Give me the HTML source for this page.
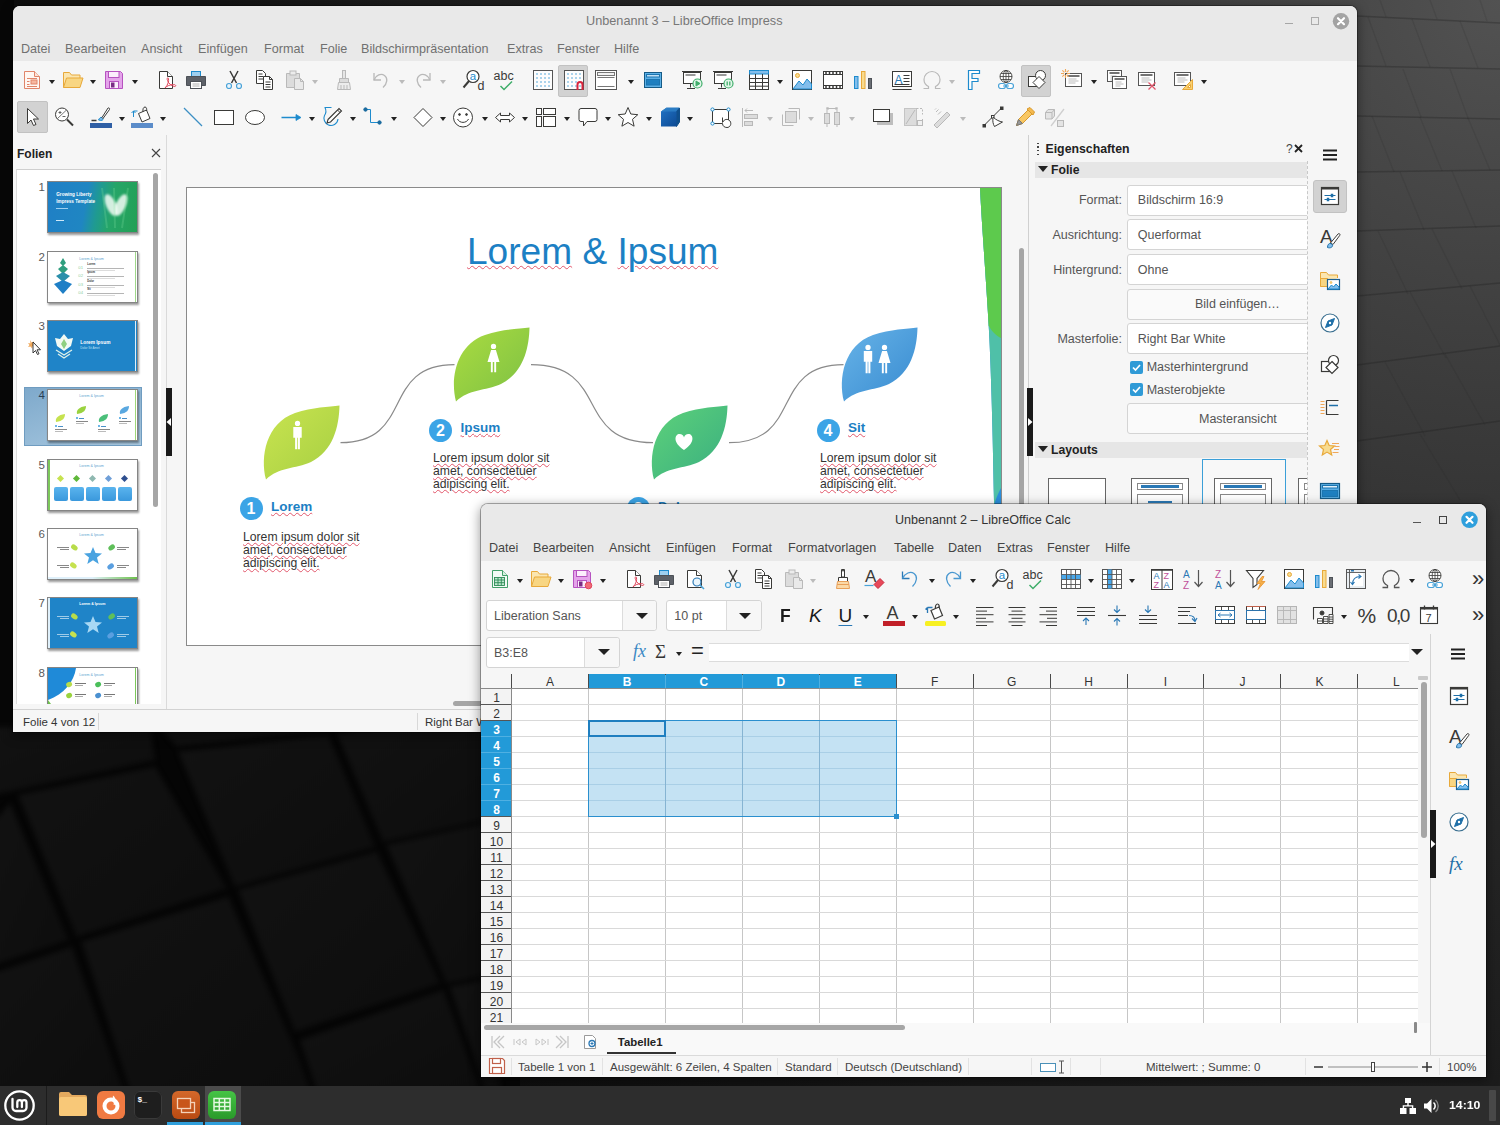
<!DOCTYPE html>
<html lang="de"><head><meta charset="utf-8"><title>Desktop</title>
<style>
*{box-sizing:border-box;margin:0;padding:0}
html,body{width:1500px;height:1125px;overflow:hidden}
body{position:relative;font-family:"Liberation Sans",sans-serif;font-size:12.5px;color:#5c5c5c;
background:radial-gradient(circle at 100% 0,#525252 0,#494949 150px,#3f3f3f 330px,#353535 515px,#262626 800px,#1c1c1c 1080px,#111 1350px,#0c0c0c 1550px,#080808 1900px)}
.abs{position:absolute}
.win{position:absolute;background:#f6f6f6;border-radius:7px 7px 0 0;box-shadow:0 0 0 1px rgba(0,0,0,.3),0 3px 12px 1px rgba(0,0,0,.4);overflow:hidden}
.tbar{position:absolute;left:0;right:0;top:0;background:#e9e9e9}
.t{position:absolute;white-space:nowrap;line-height:1}
.b{font-weight:bold}
svg{position:absolute;overflow:visible}
.ic{position:absolute;width:24px;height:24px}
.dd{position:absolute;width:0;height:0;border-left:3.5px solid transparent;border-right:3.5px solid transparent;border-top:4px solid #222}
.dd.g{border-top-color:#bbb}
.sel{position:absolute;background:#d2d2d2;border:1px solid #c2c2c2;border-radius:2px}
.inp{position:absolute;background:#fff;border:1px solid #d4d4d4;border-radius:3px}
.btn{position:absolute;background:#fafafa;border:1px solid #d4d4d4;border-radius:3px}
</style></head>
<body>
<svg class="abs" style="left:0;top:0" width="1500" height="1125" viewBox="0 0 1500 1125">
<defs><filter id="bl" x="-5%" y="-5%" width="110%" height="110%" color-interpolation-filters="sRGB"><feGaussianBlur stdDeviation="2.500"/></filter><linearGradient id="tg" x1="0" y1="0" x2="1" y2="1"><stop offset="0" stop-color="#121212"/><stop offset="1" stop-color="#0d0d0d"/></linearGradient></defs>
<rect x="0" y="700" width="520" height="400" fill="#050505"/>
<rect x="0" y="0" width="14" height="740" fill="#070707"/>
<g filter="url(#bl)">
<polygon points="18.3,795.0 155.0,766.7 226.7,888.3 76.7,936.7" fill="url(#tg)"/>
<polygon points="178.3,751.7 328.3,735.0 375.0,846.7 235.0,886.7" fill="url(#tg)"/>
<polygon points="336.7,733.3 500.0,713.3 500.0,816.7 383.3,841.7" fill="url(#tg)"/>
<polygon points="-6.7,823.3 10.0,803.3 68.3,940.0 -6.7,965.0" fill="url(#tg)"/>
<polygon points="81.7,941.7 228.3,896.7 296.7,1053.3 310.0,1090.0 130.0,1090.0" fill="url(#tg)"/>
<polygon points="238.3,890.0 376.7,851.7 440.0,983.3 295.0,1031.7" fill="url(#tg)"/>
<polygon points="386.7,845.0 500.0,820.0 500.0,973.3 446.7,983.3" fill="url(#tg)"/>
<polygon points="-6.7,973.3 71.7,946.7 123.3,1090.0 -6.7,1090.0" fill="url(#tg)"/>
<polygon points="300.0,1040.0 443.3,990.0 480.0,1090.0 316.7,1090.0" fill="url(#tg)"/>
<polygon points="450.0,986.7 500.0,976.7 500.0,1090.0 485.0,1090.0" fill="url(#tg)"/>
<polygon points="-6.7,726.7 150.0,726.7 155.0,760.0 16.7,790.0 -6.7,795.0" fill="url(#tg)"/>
<polygon points="160.0,726.7 326.7,726.7 328.3,730.0 176.7,746.7" fill="url(#tg)"/>
</g>
<line x1="1357" y1="16" x2="1500" y2="23" stroke="#1e1e1e" stroke-width="1.400" stroke-opacity=".32"/>
<line x1="1357" y1="66" x2="1500" y2="69" stroke="#1e1e1e" stroke-width="1.400" stroke-opacity=".32"/>
<line x1="1357" y1="116" x2="1500" y2="119" stroke="#1e1e1e" stroke-width="1.400" stroke-opacity=".32"/>
<line x1="1357" y1="172" x2="1500" y2="170" stroke="#1e1e1e" stroke-width="1.400" stroke-opacity=".32"/>
<line x1="1357" y1="231" x2="1500" y2="226" stroke="#1e1e1e" stroke-width="1.400" stroke-opacity=".32"/>
<line x1="1357" y1="296" x2="1500" y2="283" stroke="#1e1e1e" stroke-width="1.400" stroke-opacity=".32"/>
<line x1="1357" y1="365" x2="1500" y2="346" stroke="#1e1e1e" stroke-width="1.400" stroke-opacity=".32"/>
<line x1="1357" y1="441" x2="1500" y2="421" stroke="#1e1e1e" stroke-width="1.400" stroke-opacity=".32"/>
<line x1="1380" y1="0" x2="1386" y2="17" stroke="#1e1e1e" stroke-width="1.300" stroke-opacity=".13"/>
<line x1="1430" y1="0" x2="1437" y2="19" stroke="#1e1e1e" stroke-width="1.300" stroke-opacity=".13"/>
<line x1="1480" y1="0" x2="1487" y2="21" stroke="#1e1e1e" stroke-width="1.300" stroke-opacity=".13"/>
<line x1="1368" y1="17" x2="1386" y2="66" stroke="#1e1e1e" stroke-width="1.300" stroke-opacity=".13"/>
<line x1="1412" y1="19" x2="1430" y2="67" stroke="#1e1e1e" stroke-width="1.300" stroke-opacity=".13"/>
<line x1="1460" y1="21" x2="1478" y2="68" stroke="#1e1e1e" stroke-width="1.300" stroke-opacity=".13"/>
<line x1="1403" y1="69" x2="1421" y2="117" stroke="#1e1e1e" stroke-width="1.300" stroke-opacity=".13"/>
<line x1="1450" y1="69" x2="1468" y2="118" stroke="#1e1e1e" stroke-width="1.300" stroke-opacity=".13"/>
<line x1="1372" y1="116" x2="1394" y2="172" stroke="#1e1e1e" stroke-width="1.300" stroke-opacity=".13"/>
<line x1="1420" y1="117" x2="1442" y2="171" stroke="#1e1e1e" stroke-width="1.300" stroke-opacity=".13"/>
<line x1="1468" y1="118" x2="1490" y2="170" stroke="#1e1e1e" stroke-width="1.300" stroke-opacity=".13"/>
<line x1="1400" y1="172" x2="1424" y2="230" stroke="#1e1e1e" stroke-width="1.300" stroke-opacity=".13"/>
<line x1="1452" y1="171" x2="1476" y2="228" stroke="#1e1e1e" stroke-width="1.300" stroke-opacity=".13"/>
<line x1="1378" y1="231" x2="1408" y2="294" stroke="#1e1e1e" stroke-width="1.300" stroke-opacity=".13"/>
<line x1="1432" y1="229" x2="1462" y2="289" stroke="#1e1e1e" stroke-width="1.300" stroke-opacity=".13"/>
<line x1="1410" y1="292" x2="1446" y2="358" stroke="#1e1e1e" stroke-width="1.300" stroke-opacity=".13"/>
<line x1="1470" y1="286" x2="1500" y2="345" stroke="#1e1e1e" stroke-width="1.300" stroke-opacity=".13"/>
<line x1="1385" y1="362" x2="1425" y2="436" stroke="#1e1e1e" stroke-width="1.300" stroke-opacity=".13"/>
<line x1="1445" y1="354" x2="1485" y2="425" stroke="#1e1e1e" stroke-width="1.300" stroke-opacity=".13"/>
<line x1="1420" y1="434" x2="1460" y2="500" stroke="#1e1e1e" stroke-width="1.300" stroke-opacity=".13"/>
</svg>
<div class="win" id="impress" style="left:13px;top:6px;width:1344px;height:726px">
<svg width="0" height="0"><defs><linearGradient id="cg" x1="0" y1="0" x2="1" y2="1"><stop offset="0" stop-color="#1f6fc0"/><stop offset="1" stop-color="#0d4a94"/></linearGradient></defs></svg>
<div class="tbar" style="height:55px"></div>
<div class="t " style="left:573.0px;top:8.5px;font-size:12.7px;color:#777;">Unbenannt 3 – LibreOffice Impress</div>
<div class="abs" style="left:1272.0px;top:16.7px;width:8.0px;height:1.3px;background:#a6a6a6"></div>
<div class="abs" style="left:1298.0px;top:11.0px;width:8.0px;height:8.0px;border:1px solid #ababab"></div>
<svg style="left:1318px;top:5px" width="20" height="20" viewBox="0 0 20 20"><circle cx="10" cy="10.200" r="8.200" fill="#a3a3a3"/><path d="M7 7.200l6 6M13 7.200l-6 6" stroke="#fff" stroke-width="2.200" stroke-linecap="round"/></svg>
<div class="t " style="left:8.0px;top:37.3px;font-size:12.6px;color:#707070;">Datei</div>
<div class="t " style="left:52.0px;top:37.3px;font-size:12.6px;color:#707070;">Bearbeiten</div>
<div class="t " style="left:128.0px;top:37.3px;font-size:12.6px;color:#707070;">Ansicht</div>
<div class="t " style="left:185.0px;top:37.3px;font-size:12.6px;color:#707070;">Einfügen</div>
<div class="t " style="left:251.0px;top:37.3px;font-size:12.6px;color:#707070;">Format</div>
<div class="t " style="left:307.0px;top:37.3px;font-size:12.6px;color:#707070;">Folie</div>
<div class="t " style="left:348.0px;top:37.3px;font-size:12.6px;color:#707070;">Bildschirmpräsentation</div>
<div class="t " style="left:494.0px;top:37.3px;font-size:12.6px;color:#707070;">Extras</div>
<div class="t " style="left:544.0px;top:37.3px;font-size:12.6px;color:#707070;">Fenster</div>
<div class="t " style="left:601.0px;top:37.3px;font-size:12.6px;color:#707070;">Hilfe</div>
<div class="sel" style="left:544.5px;top:58.5px;width:30.5px;height:32.0px;"></div>
<div class="sel" style="left:1007.8px;top:58.5px;width:30.0px;height:32.0px;"></div>
<svg class="ic" style="left:6.5px;top:62.0px" viewBox="0 0 24 24" ><path d="M4.5 3.5h10l5 5v12h-15z" stroke="#e0856a" fill="#fff7f2" stroke-width="1" /><path d="M14.5 3.5v5h5" stroke="#e0856a" fill="#fbe3d8" stroke-width="1" /><rect x="11" y="12" width="6" height="4" stroke="#e0856a" fill="#f6b79f" stroke-width="1" /><path d="M7 10.5h10M7 13.5h2.5M7 16.5h2.5M7 18.5h10" stroke="#e0856a" fill="none" stroke-width="1" /></svg>
<svg class="ic" style="left:47.8px;top:62.0px" viewBox="0 0 24 24" ><path d="M2.5 19.5v-15h6l2 2.5h8.5v3" stroke="#e8a93a" fill="#fbe6b0" stroke-width="1" /><path d="M2.5 19.5l3-9.5h16.5l-3 9.5z" stroke="#e8a93a" fill="#f8d683" stroke-width="1" /></svg>
<svg class="ic" style="left:88.8px;top:62.0px" viewBox="0 0 24 24" ><path d="M3.5 3.5h15l2 2v15h-17z" stroke="#b653c0" fill="#e4a3ea" stroke-width="1" /><rect x="6.5" y="3.5" width="10.5" height="6" stroke="#b653c0" fill="#fbeefc" stroke-width="1" /><rect x="7.5" y="13.5" width="9" height="7" stroke="#b653c0" fill="#fbeefc" stroke-width="1" /><rect x="9.5" y="15" width="2.5" height="4" stroke="#7b2d86" fill="#7b2d86" stroke-width="1" /></svg>
<svg class="ic" style="left:140.8px;top:62.0px" viewBox="0 0 24 24" ><path d="M5.5 3.5h8l5 5v12h-13z" stroke="#3a3a38" fill="#fff" stroke-width="1" /><path d="M13.5 3.5v5h5" stroke="#3a3a38" fill="#fff" stroke-width="1" /><path d="M11 20c3-3 4-7 3.5-9.5c-.5-1.5-2-.5-1 2c1 3 4 5.5 7 6c2 0 1.5-2-1-2c-3 0-7 1.5-8.500 3.5z" stroke="#e0455a" fill="none" stroke-width="1" /></svg>
<svg class="ic" style="left:170.5px;top:62.0px" viewBox="0 0 24 24" ><rect x="7.5" y="3.5" width="9" height="5" stroke="#1e8bcd" fill="#9fd0f0" stroke-width="1" /><path d="M2.5 8.5h19v9h-19z" stroke="#4d5157" fill="#5d6168" stroke-width="1" /><rect x="6.5" y="13.5" width="11" height="7" stroke="#4d5157" fill="#fff" stroke-width="1" /><path d="M8.5 16h7M8.5 18h7" stroke="#b0b0b0" fill="none" stroke-width="1" /></svg>
<svg class="ic" style="left:208.8px;top:62.0px" viewBox="0 0 24 24" ><path d="M8 3l6.5 12M16 3L9.500 15" stroke="#3a3a38" fill="none" stroke-width="1.5" /><circle cx="7" cy="18" r="2.5" stroke="#4aa3d8" fill="#eaf5fc" stroke-width="1.2"/><circle cx="17" cy="18" r="2.5" stroke="#4aa3d8" fill="#eaf5fc" stroke-width="1.2"/></svg>
<svg class="ic" style="left:239.8px;top:62.0px" viewBox="0 0 24 24" ><path d="M3.500 2.500h6l3 3v10h-9z" stroke="#3a3a38" fill="#fff" stroke-width="1" /><path d="M5.5 6h4M5.500 8.500h5M5.500 11h5" stroke="#3a3a38" fill="none" stroke-width="1" /><path d="M10.5 8.500h6l3 3v10h-9z" stroke="#3a3a38" fill="#fff" stroke-width="1" /><path d="M16.5 8.500v3h3" stroke="#3a3a38" fill="none" stroke-width="1" /><path d="M12.500 14h5M12.500 16.500h5M12.500 19h5" stroke="#3a3a38" fill="none" stroke-width="1" /></svg>
<svg class="ic" style="left:270.3px;top:62.0px" viewBox="0 0 24 24" ><path d="M3.500 5.500h13v14h-13z" stroke="#b9b9b9" fill="#dcdcdc" stroke-width="1" /><rect x="7" y="3" width="6" height="4" stroke="#b9b9b9" fill="#ececec" stroke-width="1" /><path d="M11.500 10.500h6l3 3v8h-9z" stroke="#b9b9b9" fill="#e9e9e9" stroke-width="1" /><path d="M17.5 10.500v3h3" stroke="#b9b9b9" fill="none" stroke-width="1" /></svg>
<svg class="ic" style="left:319.2px;top:62.0px" viewBox="0 0 24 24" ><rect x="10.5" y="2.5" width="3" height="8" stroke="#b9b9b9" fill="#e6e6e6" stroke-width="1" /><path d="M7.500 10.500h9v4h-9z" stroke="#b9b9b9" fill="#dcdcdc" stroke-width="1" /><path d="M6.500 14.500h11l1 7h-13z" stroke="#b9b9b9" fill="#ececec" stroke-width="1" /><path d="M9 17v4M12 17v4M15 17v4" stroke="#b9b9b9" fill="none" stroke-width="1" /></svg>
<svg class="ic" style="left:355.8px;top:62.0px" viewBox="0 0 24 24" ><path d="M5 5v7h7" stroke="#b9b9b9" fill="none" stroke-width="1.3" /><path d="M5 12c2-5 7-7 10.500-4.500c3.500 2.500 3 8-1.500 12" stroke="#b9b9b9" fill="none" stroke-width="1.3" /></svg>
<svg class="ic" style="left:397.5px;top:62.0px" viewBox="0 0 24 24" ><path d="M19 5v7h-7" stroke="#b9b9b9" fill="none" stroke-width="1.3" /><path d="M19 12c-2-5-7-7-10.500-4.500c-3.500 2.500-3 8 1.500 12" stroke="#b9b9b9" fill="none" stroke-width="1.3" /></svg>
<svg class="ic" style="left:448.8px;top:62.0px" viewBox="0 0 24 24" ><circle cx="11" cy="8.5" r="6" stroke="#3a3a38" fill="#fff" stroke-width="1.2"/><path d="M7 13l-5.500 6.500" stroke="#3a3a38" fill="none" stroke-width="2" /><text x="7.800" y="12.300" font-size="11.500" fill="#1e8bcd" font-family="Liberation Sans,sans-serif">a</text><text x="15.500" y="22" font-size="12.500" fill="#3a3a38" font-family="Liberation Sans,sans-serif">d</text></svg>
<svg class="ic" style="left:478.6px;top:62.0px" viewBox="0 0 24 24" ><text x="1.500" y="11.500" font-size="12.500" fill="#3a3a38" font-family="Liberation Sans,sans-serif">abc</text><path d="M8.500 18l3.500 3.500l8-8" stroke="#3fae6a" fill="none" stroke-width="1.5" /></svg>
<svg class="ic" style="left:517.9px;top:62.0px" viewBox="0 0 24 24" ><rect x="2.5" y="2.5" width="19" height="19" stroke="#555" fill="#fdfdfd" stroke-width="1" /><rect x="5.4" y="5.4" width="1.200" height="1.200" fill="#1e8bcd"/><rect x="9.4" y="5.4" width="1.200" height="1.200" fill="#1e8bcd"/><rect x="13.4" y="5.4" width="1.200" height="1.200" fill="#1e8bcd"/><rect x="17.4" y="5.4" width="1.200" height="1.200" fill="#1e8bcd"/><rect x="5.4" y="9.4" width="1.200" height="1.200" fill="#1e8bcd"/><rect x="9.4" y="9.4" width="1.200" height="1.200" fill="#1e8bcd"/><rect x="13.4" y="9.4" width="1.200" height="1.200" fill="#1e8bcd"/><rect x="17.4" y="9.4" width="1.200" height="1.200" fill="#1e8bcd"/><rect x="5.4" y="13.4" width="1.200" height="1.200" fill="#1e8bcd"/><rect x="9.4" y="13.4" width="1.200" height="1.200" fill="#1e8bcd"/><rect x="13.4" y="13.4" width="1.200" height="1.200" fill="#1e8bcd"/><rect x="17.4" y="13.4" width="1.200" height="1.200" fill="#1e8bcd"/><rect x="5.4" y="17.4" width="1.200" height="1.200" fill="#1e8bcd"/><rect x="9.4" y="17.4" width="1.200" height="1.200" fill="#1e8bcd"/><rect x="13.4" y="17.4" width="1.200" height="1.200" fill="#1e8bcd"/><rect x="17.4" y="17.4" width="1.200" height="1.200" fill="#1e8bcd"/></svg>
<svg class="ic" style="left:549.2px;top:62.0px" viewBox="0 0 24 24" ><rect x="2.5" y="2.5" width="19" height="19" stroke="#555" fill="#fdfdfd" stroke-width="1" /><rect x="5.4" y="5.4" width="1.200" height="1.200" fill="#1e8bcd"/><rect x="9.4" y="5.4" width="1.200" height="1.200" fill="#1e8bcd"/><rect x="13.4" y="5.4" width="1.200" height="1.200" fill="#1e8bcd"/><rect x="17.4" y="5.4" width="1.200" height="1.200" fill="#1e8bcd"/><rect x="5.4" y="9.4" width="1.200" height="1.200" fill="#1e8bcd"/><rect x="9.4" y="9.4" width="1.200" height="1.200" fill="#1e8bcd"/><rect x="13.4" y="9.4" width="1.200" height="1.200" fill="#1e8bcd"/><rect x="17.4" y="9.4" width="1.200" height="1.200" fill="#1e8bcd"/><rect x="5.4" y="13.4" width="1.200" height="1.200" fill="#1e8bcd"/><rect x="9.4" y="13.4" width="1.200" height="1.200" fill="#1e8bcd"/><rect x="13.4" y="13.4" width="1.200" height="1.200" fill="#1e8bcd"/><rect x="17.4" y="13.4" width="1.200" height="1.200" fill="#1e8bcd"/><rect x="5.4" y="17.4" width="1.200" height="1.200" fill="#1e8bcd"/><rect x="9.4" y="17.4" width="1.200" height="1.200" fill="#1e8bcd"/><rect x="13.4" y="17.4" width="1.200" height="1.200" fill="#1e8bcd"/><rect x="17.4" y="17.4" width="1.200" height="1.200" fill="#1e8bcd"/><path d="M15.500 22v-5.500a2.500 2.500 0 0 1 5 0v5.500" stroke="#d8263e" fill="none" stroke-width="2" /></svg>
<svg class="ic" style="left:581.0px;top:62.0px" viewBox="0 0 24 24" ><rect x="1.5" y="2.5" width="21" height="19" stroke="#555" fill="#fff" stroke-width="1" /><rect x="3.5" y="4.5" width="17" height="3" stroke="#777" fill="#f0f0f0" stroke-width="1" /><path d="M3.500 9.500h17M3.500 18.500h17" stroke="#777" fill="none" stroke-width="1" /></svg>
<svg class="ic" style="left:628.0px;top:62.0px" viewBox="0 0 24 24" ><rect x="3.5" y="4.5" width="17" height="15" stroke="#155a86" fill="#5cb0e6" stroke-width="1" /><rect x="5.5" y="6.5" width="13" height="2.5" stroke="#1b75b0" fill="#bfe0f6" stroke-width="1" /><rect x="5.5" y="11.5" width="13" height="5.5" stroke="#1b75b0" fill="#1e7fc0" stroke-width="1" /></svg>
<svg class="ic" style="left:666.7px;top:62.0px" viewBox="0 0 24 24" ><path d="M2 3.500h20" stroke="#3a3a38" fill="none" stroke-width="1.2" /><rect x="3.5" y="4.5" width="17" height="11" stroke="#3a3a38" fill="#fff" stroke-width="1" /><path d="M5.500 7h10" stroke="#777" fill="none" stroke-width="1.5" /><path d="M10.500 15.500v4M7 20.500h8" stroke="#3a3a38" fill="none" stroke-width="1" /><circle cx="17.5" cy="15.5" r="4.5" stroke="#3fae6a" fill="#e3f6ea" stroke-width="1.2"/><path d="M16 13l4 2.500l-4 2.500z" stroke="#3fae6a" fill="#3fae6a" stroke-width="1" /></svg>
<svg class="ic" style="left:697.5px;top:62.0px" viewBox="0 0 24 24" ><path d="M2 3.500h20" stroke="#3a3a38" fill="none" stroke-width="1.2" /><rect x="3.5" y="4.5" width="17" height="11" stroke="#3a3a38" fill="#fff" stroke-width="1" /><path d="M5.500 7h10" stroke="#777" fill="none" stroke-width="1.5" /><path d="M10.500 15.500v4M7 20.500h8" stroke="#3a3a38" fill="none" stroke-width="1" /><circle cx="17.5" cy="15.5" r="4.5" stroke="#3fae6a" fill="#e3f6ea" stroke-width="1.2"/><path d="M16.200 13.500v4M18.800 13.500v4" stroke="#3fae6a" fill="none" stroke-width="1.3" /></svg>
<svg class="ic" style="left:733.8px;top:62.0px" viewBox="0 0 24 24" ><rect x="2.5" y="2.5" width="19" height="19" stroke="#3a3a38" fill="#fff" stroke-width="1" /><rect x="2.5" y="2.5" width="19" height="3.5" stroke="#1e8bcd" fill="#83beec" stroke-width="1" /><path d="M2.500 10.500h19M2.500 14.500h19M2.500 18.200h19M8.500 6v15.500M15.500 6v15.500" stroke="#3a3a38" fill="none" stroke-width="1" /></svg>
<svg class="ic" style="left:777.0px;top:62.0px" viewBox="0 0 24 24" ><rect x="2.5" y="2.5" width="19" height="19" stroke="#3a3a38" fill="#fff" stroke-width="1" /><path d="M3 21l6-8l4 4l4-6l4.500 5v5z" stroke="#1e8bcd" fill="#83beec" stroke-width="1" /><circle cx="7.5" cy="7.5" r="2" stroke="#e8a93a" fill="#f8db8f" stroke-width="1"/></svg>
<svg class="ic" style="left:807.8px;top:62.0px" viewBox="0 0 24 24" ><rect x="2.5" y="3.5" width="19" height="17" stroke="#3a3a38" fill="#fff" stroke-width="1" /><path d="M2.500 6.500h19M2.500 17.500h19" stroke="#3a3a38" fill="none" stroke-width="1" /><path d="M5 3.500v3M8.500 3.500v3M12 3.500v3M15.500 3.500v3M19 3.500v3M5 17.500v3M8.500 17.500v3M12 17.500v3M15.500 17.500v3M19 17.500v3" stroke="#3a3a38" fill="none" stroke-width="1.5" /></svg>
<svg class="ic" style="left:838.0px;top:62.0px" viewBox="0 0 24 24" ><rect x="3.5" y="8.5" width="3.5" height="12" stroke="#1e8bcd" fill="#83beec" stroke-width="1" /><rect x="10.5" y="3.5" width="3.5" height="17" stroke="#e8a93a" fill="#f8db8f" stroke-width="1" /><rect x="17.5" y="10.5" width="3" height="10" stroke="#4d5157" fill="#6a6e74" stroke-width="1" /></svg>
<svg class="ic" style="left:877.4px;top:62.0px" viewBox="0 0 24 24" ><rect x="2.5" y="3.5" width="19" height="15" stroke="#3a3a38" fill="#fff" stroke-width="1" /><text x="4.500" y="15.500" font-size="12" fill="#2a78b5" font-family="Liberation Sans,sans-serif">A</text><path d="M13.500 7.500h6M13.500 10.500h6M13.500 13.500h6M4.500 16.500h15M2.500 21.500h19" stroke="#3a3a38" fill="none" stroke-width="1" /></svg>
<svg class="ic" style="left:906.7px;top:62.0px" viewBox="0 0 24 24" ><path d="M3.500 20.500h5v-2c-3-1.500-4.500-4-4.500-7a8 8 0 0 1 16 0c0 3-1.500 5.500-4.500 7v2h5" stroke="#b9b9b9" fill="none" stroke-width="1.2" /></svg>
<svg class="ic" style="left:949.4px;top:62.0px" viewBox="0 0 24 24" ><path d="M6.500 2.500h11v3h-7.500v5h6v3h-6v8h-3.500z" stroke="#1e8bcd" fill="#fff" stroke-width="1.2" /></svg>
<svg class="ic" style="left:981.0px;top:62.0px" viewBox="0 0 24 24" ><circle cx="12" cy="8.5" r="6" stroke="#3a3a38" fill="#fff" stroke-width="0.9"/><ellipse cx="12" cy="8.5" rx="2.8" ry="6" stroke="#3a3a38" fill="none" stroke-width="0.8"/><path d="M6 8.500h12M12 2.500v12M7 5.500h10M7 11.500h10" stroke="#3a3a38" fill="none" stroke-width="0.8" /><rect x="4.5" y="15.5" width="7" height="5" stroke="#4aa3d8" fill="#fff" stroke-width="1.2" rx="2.500"/><rect x="12.5" y="15.5" width="7" height="5" stroke="#4aa3d8" fill="#fff" stroke-width="1.2" rx="2.500"/><line x1="9" y1="18" x2="15" y2="18" stroke="#4aa3d8" stroke-width="1.2" /></svg>
<svg class="ic" style="left:1011.7px;top:62.0px" viewBox="0 0 24 24" ><rect x="3.5" y="8.5" width="9" height="10" stroke="#3a3a38" fill="#fff" stroke-width="1" /><circle cx="15.5" cy="7.5" r="5" stroke="#3a3a38" fill="#fff" stroke-width="1"/><path d="M14 8.500l6 6l-6 6l-6-6z" stroke="#3a3a38" fill="#fff" stroke-width="1" /></svg>
<svg class="ic" style="left:1047.0px;top:62.0px" viewBox="0 0 24 24" ><rect x="5.5" y="5.5" width="16" height="13" stroke="#555" fill="#fff" stroke-width="1" /><path d="M7.5 8.0h12" stroke="#444" fill="none" stroke-width="1.6" /><path d="M8.5 11.0h8M8.5 13.0h10M8.5 15.0h7" stroke="#aaa" fill="none" stroke-width="0.8" /><line x1="7.0" y1="5.5" x2="10.0" y2="5.5" stroke="#f0a85a" stroke-width="1.1" /><line x1="6.6" y1="6.6" x2="8.7" y2="8.7" stroke="#f0a85a" stroke-width="1.1" /><line x1="5.5" y1="7.0" x2="5.5" y2="10.0" stroke="#f0a85a" stroke-width="1.1" /><line x1="4.4" y1="6.6" x2="2.3" y2="8.7" stroke="#f0a85a" stroke-width="1.1" /><line x1="4.0" y1="5.5" x2="1.0" y2="5.5" stroke="#f0a85a" stroke-width="1.1" /><line x1="4.4" y1="4.4" x2="2.3" y2="2.3" stroke="#f0a85a" stroke-width="1.1" /><line x1="5.5" y1="4.0" x2="5.5" y2="1.0" stroke="#f0a85a" stroke-width="1.1" /><line x1="6.6" y1="4.4" x2="8.7" y2="2.3" stroke="#f0a85a" stroke-width="1.1" /></svg>
<svg class="ic" style="left:1091.7px;top:62.0px" viewBox="0 0 24 24" ><rect x="2.5" y="2.5" width="14" height="11" stroke="#555" fill="#fff" stroke-width="1" /><path d="M4.5 5.0h10" stroke="#444" fill="none" stroke-width="1.6" /><path d="M5.5 8.0h6M5.5 10.0h8M5.5 12.0h5" stroke="#aaa" fill="none" stroke-width="0.8" /><rect x="7.5" y="8.5" width="14" height="12" stroke="#555" fill="#fff" stroke-width="1" /><path d="M9.5 11.0h10" stroke="#444" fill="none" stroke-width="1.6" /><path d="M10.5 14.0h6M10.5 16.0h8M10.5 18.0h5" stroke="#aaa" fill="none" stroke-width="0.8" /></svg>
<svg class="ic" style="left:1122.7px;top:62.0px" viewBox="0 0 24 24" ><rect x="2.5" y="4.5" width="16" height="13" stroke="#555" fill="#fff" stroke-width="1" /><path d="M4.5 7.0h12" stroke="#444" fill="none" stroke-width="1.6" /><path d="M5.5 10.0h8M5.5 12.0h10M5.5 14.0h7" stroke="#aaa" fill="none" stroke-width="0.8" /><path d="M12.500 14.500l7 7M19.500 14.500l-7 7" stroke="#e0556a" fill="none" stroke-width="1.3" /></svg>
<svg class="ic" style="left:1159.0px;top:62.0px" viewBox="0 0 24 24" ><rect x="2.5" y="4.5" width="16" height="13" stroke="#555" fill="#fff" stroke-width="1" /><path d="M4.5 7.0h12" stroke="#444" fill="none" stroke-width="1.6" /><path d="M5.5 10.0h8M5.5 12.0h10M5.5 14.0h7" stroke="#aaa" fill="none" stroke-width="0.8" /><path d="M20.500 11.500v10h-10z" stroke="#e8a93a" fill="#f8d070" stroke-width="1" /><path d="M18.500 16.500v3h-3z" stroke="#e8a93a" fill="#fff" stroke-width="1" /></svg>
<i class="dd" style="left:36.0px;top:74.0px"></i>
<i class="dd" style="left:77.3px;top:74.0px"></i>
<i class="dd" style="left:118.5px;top:74.0px"></i>
<i class="dd" style="left:614.5px;top:74.0px"></i>
<i class="dd" style="left:763.5px;top:74.0px"></i>
<i class="dd" style="left:1077.5px;top:74.0px"></i>
<i class="dd" style="left:1188.2px;top:74.0px"></i>
<i class="dd g" style="left:298.8px;top:74.0px"></i>
<i class="dd g" style="left:385.5px;top:74.0px"></i>
<i class="dd g" style="left:426.8px;top:74.0px"></i>
<i class="dd g" style="left:936.3px;top:74.0px"></i>
<div class="sel" style="left:4.2px;top:95.0px;width:30.5px;height:32.0px;"></div>
<svg class="ic" style="left:7.0px;top:99.0px" viewBox="0 0 24 24" ><path d="M7.500 3.500v15l3.500-3.500l2.500 5.500l2.500-1l-2.500-5.500h5z" stroke="#3a3a38" fill="#fff" stroke-width="1" /></svg>
<svg class="ic" style="left:39.0px;top:99.0px" viewBox="0 0 24 24" ><circle cx="10" cy="9.5" r="6.5" stroke="#3a3a38" fill="#fff" stroke-width="1"/><path d="M15 14.500l6 6" stroke="#3a3a38" fill="none" stroke-width="2" /><path d="M5.500 13.500l9-8.500" stroke="#555" fill="none" stroke-width="0.8" /><path d="M6.500 7.500h3M8 6v3M10.500 11.500h3" stroke="#555" fill="none" stroke-width="0.9" /></svg>
<svg class="ic" style="left:76.0px;top:99.0px" viewBox="0 0 24 24" ><path d="M2.500 15.500h5" stroke="#3a3a38" fill="none" stroke-width="1.3" /><path d="M9.500 15c1-2 2-3 3.500-2.500l1 1c.5 1.500-1 2.500-4.500 1.500z" stroke="#1e8bcd" fill="#83beec" stroke-width="1" /><path d="M13 12.500l6-9.500c1-.5 2 .5 1.500 1.500l-6.500 9z" stroke="#3a3a38" fill="#fff" stroke-width="1" /><rect x="1" y="18" width="22" height="5" stroke="none" fill="#2f5fa5" stroke-width="1" /></svg>
<svg class="ic" style="left:117.0px;top:99.0px" viewBox="0 0 24 24" ><path d="M3.500 12v-6M3.500 6l-2 2M3.500 6l2 2M3.500 6h4" stroke="#1e8bcd" fill="none" stroke-width="1" /><path d="M8.500 8.500l8-3.500l3.500 8.500l-8 3.500z" stroke="#3a3a38" fill="#fff" stroke-width="1" /><path d="M13 7c-.5-3 .5-5 2-5s2 2 1.500 4" stroke="#3a3a38" fill="none" stroke-width="1" /><rect x="1" y="18" width="22" height="5" stroke="none" fill="#5b8cc9" stroke-width="1" /></svg>
<svg class="ic" style="left:167.5px;top:99.0px" viewBox="0 0 24 24" ><line x1="3" y1="3" x2="21" y2="21" stroke="#3d8fc4" stroke-width="1.3" /></svg>
<svg class="ic" style="left:198.5px;top:99.0px" viewBox="0 0 24 24" ><rect x="2.5" y="5.5" width="19" height="14" stroke="#3a3a38" fill="#fff" stroke-width="1" /></svg>
<svg class="ic" style="left:229.6px;top:99.0px" viewBox="0 0 24 24" ><ellipse cx="12" cy="12.5" rx="9.5" ry="7" stroke="#3a3a38" fill="#fff" stroke-width="1"/></svg>
<svg class="ic" style="left:266.7px;top:99.0px" viewBox="0 0 24 24" ><path d="M1.500 12.500h17" stroke="#1e8bcd" fill="none" stroke-width="1.3" /><path d="M16 9.500l5 3l-5 3z" stroke="#1e8bcd" fill="#1e8bcd" stroke-width="0.8" /></svg>
<svg class="ic" style="left:308.0px;top:99.0px" viewBox="0 0 24 24" ><path d="M3.500 2.500h7M4 2.500c1.500 3 1.500 5-.5 8c-1.500 3 0 8 4 9.500c4 1.500 9-1 9.500-6" stroke="#1e8bcd" fill="none" stroke-width="1.1" /><path d="M7 14.500l11-11l2.500 2.500l-11 11l-3.500 1z" stroke="#3a3a38" fill="#fff" stroke-width="1.1" /><path d="M16.500 5l2.500 2.500" stroke="#3a3a38" fill="none" stroke-width="1" /></svg>
<svg class="ic" style="left:348.8px;top:99.0px" viewBox="0 0 24 24" ><path d="M3.500 4.500h5v13h8" stroke="#1e8bcd" fill="none" stroke-width="1" /><circle cx="3.5" cy="4.5" r="1.7" stroke="#1a6a9e" fill="#1a6a9e" stroke-width="1"/><circle cx="17.5" cy="17.5" r="1.7" stroke="#1a6a9e" fill="#1a6a9e" stroke-width="1"/></svg>
<svg class="ic" style="left:397.5px;top:99.0px" viewBox="0 0 24 24" ><path d="M12 3.500l9 9l-9 9l-9-9z" stroke="#3a3a38" fill="#fff" stroke-width="1" /></svg>
<svg class="ic" style="left:438.3px;top:99.0px" viewBox="0 0 24 24" ><circle cx="12" cy="12.5" r="9.5" stroke="#3a3a38" fill="#fff" stroke-width="1"/><circle cx="8.5" cy="9.5" r="0.9" stroke="#3a3a38" fill="#3a3a38" stroke-width="1"/><circle cx="15.5" cy="9.5" r="0.9" stroke="#3a3a38" fill="#3a3a38" stroke-width="1"/><path d="M6.500 14c2 4.500 9 4.500 11 0" stroke="#3a3a38" fill="none" stroke-width="1" /></svg>
<svg class="ic" style="left:480.0px;top:99.0px" viewBox="0 0 24 24" ><path d="M2.500 12.500l5-4.500v2.500h9v-2.500l5 4.500l-5 4.500v-2.500h-9v2.500z" stroke="#3a3a38" fill="#fff" stroke-width="1" /></svg>
<svg class="ic" style="left:521.3px;top:99.0px" viewBox="0 0 24 24" ><rect x="2.5" y="3.5" width="5" height="6" stroke="#3a3a38" fill="#fff" stroke-width="1" /><rect x="9.5" y="3.5" width="12" height="6" stroke="#3a3a38" fill="#fff" stroke-width="1" /><rect x="2.5" y="11.5" width="5" height="10" stroke="#3a3a38" fill="#fff" stroke-width="1" /><rect x="9.5" y="11.5" width="12" height="10" stroke="#3a3a38" fill="#fff" stroke-width="1" /></svg>
<svg class="ic" style="left:562.5px;top:99.0px" viewBox="0 0 24 24" ><path d="M5 3.500h14a2 2 0 0 1 2 2v9a2 2 0 0 1-2 2h-8l-3.500 4.500v-4.500h-2.500a2 2 0 0 1-2-2v-9a2 2 0 0 1 2-2z" stroke="#3a3a38" fill="#fff" stroke-width="1" /></svg>
<svg class="ic" style="left:603.3px;top:99.0px" viewBox="0 0 24 24" ><path d="M12 2.500l2.800 6.500l7 .7l-5.300 4.600l1.600 6.900l-6.100-3.700l-6.100 3.700l1.600-6.900l-5.300-4.600l7-.7z" stroke="#3a3a38" fill="#fff" stroke-width="1" /></svg>
<svg class="ic" style="left:644.9px;top:99.0px" viewBox="0 0 24 24" ><path d="M3.500 6.500l5-3.500h13l-3 3.500z" stroke="#2a7cc4" fill="#2a7cc4" stroke-width="1" /><path d="M18.500 6.500l3-3.500v14l-3 4.500z" stroke="#0f4f8c" fill="#0f4f8c" stroke-width="1" /><rect x="3" y="6.500" width="15.500" height="15" fill="url(#cg)"/></svg>
<svg class="ic" style="left:696.0px;top:99.0px" viewBox="0 0 24 24" ><rect x="3.5" y="4.5" width="16" height="14" stroke="#3a3a38" fill="#fff" stroke-width="1" /><circle cx="3.5" cy="4.5" r="1.6" stroke="#1e8bcd" fill="#fff" stroke-width="1"/><circle cx="19.5" cy="4.5" r="1.6" stroke="#1e8bcd" fill="#fff" stroke-width="1"/><circle cx="3.5" cy="18.5" r="1.6" stroke="#1e8bcd" fill="#fff" stroke-width="1"/><path d="M13.500 12.500v5h5" stroke="#3a3a38" fill="#fff" stroke-width="1" /><path d="M14 17c1-3 5-3.500 7-1c2 3 0 6.500-3 6.500c-2.500 0-4.500-1.500-4.500-4" stroke="#3a3a38" fill="#fff" stroke-width="1" /></svg>
<svg class="ic" style="left:725.0px;top:99.0px" viewBox="0 0 24 24" ><line x1="4.5" y1="3" x2="4.5" y2="22" stroke="#b9b9b9" stroke-width="1" /><path d="M7 5.500h8M7 5.500l2-2M7 5.500l2 2" stroke="#b9b9b9" fill="none" stroke-width="1" /><rect x="6.5" y="9.5" width="13" height="4" stroke="#b9b9b9" fill="#dcdcdc" stroke-width="1" /><rect x="6.5" y="16.5" width="8" height="4" stroke="#b9b9b9" fill="#dcdcdc" stroke-width="1" /></svg>
<svg class="ic" style="left:765.5px;top:99.0px" viewBox="0 0 24 24" ><path d="M9.500 3.500h11v11" stroke="#b9b9b9" fill="none" stroke-width="1" /><path d="M14.500 20.500h-11v-11" stroke="#b9b9b9" fill="none" stroke-width="1" /><rect x="6.5" y="6.5" width="11" height="11" stroke="#b9b9b9" fill="#dcdcdc" stroke-width="1" /></svg>
<svg class="ic" style="left:807.0px;top:99.0px" viewBox="0 0 24 24" ><path d="M7 3.500h10M7 3.500l1.500-1.500M7 3.500l1.500 1.500M17 3.500l-1.500-1.500M17 3.500l-1.500 1.500" stroke="#b9b9b9" fill="none" stroke-width="1" /><path d="M7 2v20M17 2v20" stroke="#b9b9b9" fill="none" stroke-width="1" /><rect x="4.5" y="8.5" width="5" height="10" stroke="#b9b9b9" fill="#dcdcdc" stroke-width="1" /><rect x="14.5" y="7.5" width="5" height="12" stroke="#b9b9b9" fill="#dcdcdc" stroke-width="1" /></svg>
<svg class="ic" style="left:857.5px;top:99.0px" viewBox="0 0 24 24" ><rect x="6" y="8" width="16" height="12" stroke="none" fill="#bdbdbd" stroke-width="0" /><rect x="2.5" y="4.5" width="16" height="12" stroke="#3a3a38" fill="#fff" stroke-width="1" /></svg>
<svg class="ic" style="left:888.6px;top:99.0px" viewBox="0 0 24 24" ><rect x="2.5" y="3.5" width="12" height="17" stroke="#c4c4c4" fill="#dcdcdc" stroke-width="1" /><path d="M14.500 3.500h6v6M20.500 14v6.500h-6" stroke="#b9b9b9" fill="none" stroke-width="1" stroke-dasharray="2 1.500"/><rect x="15.5" y="15.5" width="5" height="5" stroke="#b9b9b9" fill="#f0f0f0" stroke-width="1" /><path d="M4 19l9-14" stroke="#b9b9b9" fill="none" stroke-width="1" /></svg>
<svg class="ic" style="left:917.7px;top:99.0px" viewBox="0 0 24 24" ><path d="M3 20l13-13l3 3l-13 13z" stroke="#b9b9b9" fill="#dcdcdc" stroke-width="1" /><path d="M5 7l2.500-2.500M7 9.500l3-3M4 4.500l1-1" stroke="#b9b9b9" fill="none" stroke-width="1" /></svg>
<svg class="ic" style="left:967.5px;top:99.0px" viewBox="0 0 24 24" ><path d="M3 20.500l17-17" stroke="#3a3a38" fill="none" stroke-width="1" /><rect x="2" y="19.5" width="2.5" height="2.5" stroke="#3a3a38" fill="#3a3a38" stroke-width="1" /><rect x="19.5" y="2" width="2.5" height="2.5" stroke="#3a3a38" fill="#3a3a38" stroke-width="1" /><rect x="10.5" y="10.5" width="2.5" height="2.5" stroke="#3a3a38" fill="#fff" stroke-width="1" /><path d="M12 13c-.5 3 0 6 1.500 8.500l8-4.500c-3-.5-6.500-2-9.500-5" stroke="#3a3a38" fill="#fff" stroke-width="1" /></svg>
<svg class="ic" style="left:998.8px;top:99.0px" viewBox="0 0 24 24" ><path d="M4.500 20.500l2-6l9.500-9.500l4 4l-9.500 9.500z" stroke="#d89a2e" fill="#f8c763" stroke-width="1" /><path d="M15 4l3-1.500l4.500 4.500l-1.500 3z" stroke="#d89a2e" fill="#f5b94e" stroke-width="1" /><path d="M4.500 20.500l2-6l4 4z" stroke="#777" fill="#999" stroke-width="1" /></svg>
<svg class="ic" style="left:1030.0px;top:99.0px" viewBox="0 0 24 24" ><path d="M2.500 7.500l2.500-3h6.500v6.500l-2.500 3h-6.500zM2.500 7.500h6.500v6.500M9 7.500l2.500-3" stroke="#b9b9b9" fill="#e4e4e4" stroke-width="1" /><path d="M21 4l-13 17" stroke="#cfcfcf" fill="none" stroke-width="1.3" /><rect x="14.5" y="15.5" width="6" height="6" stroke="#b9b9b9" fill="#e4e4e4" stroke-width="1" /></svg>
<i class="dd" style="left:105.5px;top:111.0px"></i>
<i class="dd" style="left:146.5px;top:111.0px"></i>
<i class="dd" style="left:295.5px;top:111.0px"></i>
<i class="dd" style="left:336.8px;top:111.0px"></i>
<i class="dd" style="left:378.2px;top:111.0px"></i>
<i class="dd" style="left:426.8px;top:111.0px"></i>
<i class="dd" style="left:468.5px;top:111.0px"></i>
<i class="dd" style="left:509.3px;top:111.0px"></i>
<i class="dd" style="left:550.5px;top:111.0px"></i>
<i class="dd" style="left:591.8px;top:111.0px"></i>
<i class="dd" style="left:633.0px;top:111.0px"></i>
<i class="dd" style="left:674.3px;top:111.0px"></i>
<i class="dd g" style="left:754.3px;top:111.0px"></i>
<i class="dd g" style="left:795.2px;top:111.0px"></i>
<i class="dd g" style="left:836.3px;top:111.0px"></i>
<i class="dd g" style="left:947.3px;top:111.0px"></i>
<div class="t b" style="left:4px;top:141.5px;font-size:12px;color:#222">Folien</div>
<svg style="left:138px;top:142px" width="10" height="10" viewBox="0 0 10 10"><path d="M1 1l8 8M9 1l-8 8" stroke="#444" stroke-width="1.100"/></svg>
<div class="abs" style="left:3px;top:163px;width:145px;height:535px;background:#fff;border-top:1px solid #cfcfcf;border-left:1px solid #dcdcdc;overflow:hidden">
<div class="abs" style="left:136px;top:3px;width:5px;height:334px;border-radius:3px;background:#a6a6a6"></div>
<div class="t" style="left:16.0px;top:12.4px;width:12px;text-align:right;font-size:11.500px;color:#5a5a5a">1</div>
<div class="abs" style="left:30.3px;top:11.4px;width:91px;height:52px;background:#fff;border:1px solid #858585;box-shadow:1px 1.500px 2px rgba(0,0,0,.4);overflow:hidden"><div class="abs" style="inset:0;background:linear-gradient(100deg,#1f7fc6 0%,#1f86c2 42%,#1f9a92 55%,#25a568 70%,#23a055 100%)"></div><svg style="left:50px;top:6px" width="36" height="40" viewBox="0 0 36 40"><defs><filter id="hb" x="-20%" y="-20%" width="140%" height="140%"><feGaussianBlur stdDeviation=".9"/></filter></defs><g filter="url(#hb)" fill="#f2fbf5" fill-opacity=".85"><ellipse cx="18" cy="16" rx="5" ry="11.500" transform="rotate(-24 18 28)"/><ellipse cx="18" cy="16" rx="5" ry="11.500" transform="rotate(24 18 28)"/></g><path d="M4 0l5 40M30 0l-6 40M16 0l1 40" stroke="#7fe0a0" stroke-opacity=".25" stroke-width="2"/></svg><div class="t" style="left:8px;top:11px;font-size:4.6px;color:#fff;font-weight:bold">Growing Liberty</div><div class="t" style="left:8px;top:17.5px;font-size:4.6px;color:#fff;font-weight:bold">Impress Template</div><div class="abs" style="left:8px;top:26px;width:12px;height:1px;background:#9fd0f0"></div><div class="abs" style="left:8px;top:38px;width:8px;height:1px;background:#cfe8f8"></div></div>
<div class="t" style="left:16.0px;top:81.7px;width:12px;text-align:right;font-size:11.500px;color:#5a5a5a">2</div>
<div class="abs" style="left:30.3px;top:80.7px;width:91px;height:52px;background:#fff;border:1px solid #858585;box-shadow:1px 1.500px 2px rgba(0,0,0,.4);overflow:hidden"><div class="abs" style="right:1px;top:0;width:1.500px;height:100%;background:#9fd88a"></div><svg style="left:6px;top:6px" width="18" height="38" viewBox="0 0 18 38"><path d="M9 0l3 5l-3 3l-3-3zM9 7l5 4l-5 5l-5-5z" fill="#2f9e7e"/><path d="M9 14l7 4l-7 6l-7-6z" fill="#2a8faa"/><path d="M9 22l9 4l-9 10l-9-10z" fill="#1f7fc6"/></svg><div class="t" style="left:31px;top:6px;font-size:3.6px;color:#5b9fd0;">Lorem &amp; Ipsum</div><div class="t" style="left:30px;top:14px;font-size:4.2px;color:#8fd0a0;">01</div><div class="t" style="left:39px;top:12.5px;font-size:2.6px;color:#333;font-weight:bold">Lorem</div><div class="abs" style="left:39px;top:16px;width:37px;height:1px;background:#b5b5b5"></div><div class="abs" style="left:39px;top:18px;width:28px;height:1px;background:#dcdcdc"></div><div class="t" style="left:30px;top:22px;font-size:4.2px;color:#8fd0a0;">02</div><div class="t" style="left:39px;top:20.5px;font-size:2.6px;color:#333;font-weight:bold">Ipsum</div><div class="abs" style="left:39px;top:24px;width:37px;height:1px;background:#b5b5b5"></div><div class="abs" style="left:39px;top:26px;width:28px;height:1px;background:#dcdcdc"></div><div class="t" style="left:30px;top:31px;font-size:4.2px;color:#8fd0a0;">03</div><div class="t" style="left:39px;top:29.5px;font-size:2.6px;color:#333;font-weight:bold">Dolor</div><div class="abs" style="left:39px;top:33px;width:37px;height:1px;background:#b5b5b5"></div><div class="abs" style="left:39px;top:35px;width:28px;height:1px;background:#dcdcdc"></div><div class="t" style="left:30px;top:39px;font-size:4.2px;color:#8fd0a0;">04</div><div class="t" style="left:39px;top:37.5px;font-size:2.6px;color:#333;font-weight:bold">Sit</div><div class="abs" style="left:39px;top:41px;width:37px;height:1px;background:#b5b5b5"></div><div class="abs" style="left:39px;top:43px;width:28px;height:1px;background:#dcdcdc"></div></div>
<div class="t" style="left:16.0px;top:151.1px;width:12px;text-align:right;font-size:11.500px;color:#5a5a5a">3</div>
<div class="abs" style="left:30.3px;top:150.1px;width:91px;height:52px;background:#fff;border:1px solid #858585;box-shadow:1px 1.500px 2px rgba(0,0,0,.4);overflow:hidden"><div class="abs" style="inset:0;background:#1f84c8"></div><div class="abs" style="right:1px;top:0;width:1.500px;height:100%;background:#dff0fa"></div><svg style="left:6px;top:12px" width="20" height="30" viewBox="0 0 20 30"><path d="M10 1l4 5l5-1l-2 8l-7 5l-7-5l-2-8l5 1z" fill="#f2faf4"/><path d="M10 6l3 5l-3 5l-3-5z" fill="#8fd080"/><path d="M2 17l8 5l8-5M4 21l6 4l6-4" stroke="#dff2ea" stroke-width="1.300" fill="none"/></svg><div class="t" style="left:32px;top:20px;font-size:4.8px;color:#fff;font-weight:bold">Lorem Ipsum</div><div class="t" style="left:32px;top:25.5px;font-size:3px;color:#bfe0f4;">Dolor Sit Amet</div></div>
<div class="abs" style="left:7.2px;top:216.5px;width:117.500px;height:59px;background:linear-gradient(160deg,#7ea9cb,#a9c9e1);border:1px solid #6f9cc0"></div>
<div class="t" style="left:16.0px;top:220.4px;width:12px;text-align:right;font-size:11.500px;color:#2a3f55">4</div>
<div class="abs" style="left:30.3px;top:219.4px;width:91px;height:52px;background:#fff;border:1px solid #858585;box-shadow:1px 1.500px 2px rgba(0,0,0,.4);overflow:hidden"><div class="abs" style="right:1px;top:0;width:1.300px;height:100%;background:#9fd878"></div><div class="t" style="left:31px;top:5px;font-size:3.6px;color:#5b9fd0;">Lorem &amp; Ipsum</div><svg style="left:8px;top:24px" width="9" height="8" viewBox="0 0 9 8"><path d="M0 8C-1 4 2 1 9 0C9 4 7 7 0 8z" fill="#c6e24f"/></svg><div class="abs" style="left:7px;top:35px;width:2px;height:2px;border-radius:1px;background:#3b9fe0"></div><div class="abs" style="left:10px;top:35.5px;width:5px;height:1px;background:#4a90c8"></div><div class="abs" style="left:7px;top:39px;width:12px;height:1px;background:#888"></div><div class="abs" style="left:7px;top:41px;width:8px;height:1px;background:#bbb"></div><svg style="left:29px;top:16px" width="9" height="8" viewBox="0 0 9 8"><path d="M0 8C-1 4 2 1 9 0C9 4 7 7 0 8z" fill="#9ad33f"/></svg><div class="abs" style="left:28px;top:27px;width:2px;height:2px;border-radius:1px;background:#3b9fe0"></div><div class="abs" style="left:31px;top:27.5px;width:5px;height:1px;background:#4a90c8"></div><div class="abs" style="left:28px;top:31px;width:12px;height:1px;background:#888"></div><div class="abs" style="left:28px;top:33px;width:8px;height:1px;background:#bbb"></div><svg style="left:51px;top:24px" width="9" height="8" viewBox="0 0 9 8"><path d="M0 8C-1 4 2 1 9 0C9 4 7 7 0 8z" fill="#4bbf7a"/></svg><div class="abs" style="left:50px;top:35px;width:2px;height:2px;border-radius:1px;background:#3b9fe0"></div><div class="abs" style="left:53px;top:35.5px;width:5px;height:1px;background:#4a90c8"></div><div class="abs" style="left:50px;top:39px;width:12px;height:1px;background:#888"></div><div class="abs" style="left:50px;top:41px;width:8px;height:1px;background:#bbb"></div><svg style="left:72px;top:16px" width="9" height="8" viewBox="0 0 9 8"><path d="M0 8C-1 4 2 1 9 0C9 4 7 7 0 8z" fill="#5aa8e0"/></svg><div class="abs" style="left:71px;top:27px;width:2px;height:2px;border-radius:1px;background:#3b9fe0"></div><div class="abs" style="left:74px;top:27.5px;width:5px;height:1px;background:#4a90c8"></div><div class="abs" style="left:71px;top:31px;width:12px;height:1px;background:#888"></div><div class="abs" style="left:71px;top:33px;width:8px;height:1px;background:#bbb"></div></div>
<div class="t" style="left:16.0px;top:289.7px;width:12px;text-align:right;font-size:11.500px;color:#5a5a5a">5</div>
<div class="abs" style="left:30.3px;top:288.7px;width:91px;height:52px;background:#fff;border:1px solid #858585;box-shadow:1px 1.500px 2px rgba(0,0,0,.4);overflow:hidden"><div class="abs" style="left:0;top:0;width:1.300px;height:100%;background:#7cc85a"></div><div class="t" style="left:31px;top:5px;font-size:3.6px;color:#5b9fd0;">Lorem &amp; Ipsum</div><div class="abs" style="left:10px;top:16.500px;width:5px;height:5px;transform:rotate(45deg);background:#c6e24f"></div><div class="abs" style="left:6px;top:27px;width:13.500px;height:14px;border-radius:2px;background:linear-gradient(#5ab4ee,#3a98dc)"></div><div class="abs" style="left:26px;top:16.500px;width:5px;height:5px;transform:rotate(45deg);background:#5fb83a"></div><div class="abs" style="left:22px;top:27px;width:13.500px;height:14px;border-radius:2px;background:linear-gradient(#5ab4ee,#3a98dc)"></div><div class="abs" style="left:42px;top:16.500px;width:5px;height:5px;transform:rotate(45deg);background:#8fb8b0"></div><div class="abs" style="left:38px;top:27px;width:13.500px;height:14px;border-radius:2px;background:linear-gradient(#5ab4ee,#3a98dc)"></div><div class="abs" style="left:58px;top:16.500px;width:5px;height:5px;transform:rotate(45deg);background:#6f9fd8"></div><div class="abs" style="left:54px;top:27px;width:13.500px;height:14px;border-radius:2px;background:linear-gradient(#5ab4ee,#3a98dc)"></div><div class="abs" style="left:74px;top:16.500px;width:5px;height:5px;transform:rotate(45deg);background:#2f4f8f"></div><div class="abs" style="left:70px;top:27px;width:13.500px;height:14px;border-radius:2px;background:linear-gradient(#5ab4ee,#3a98dc)"></div></div>
<div class="t" style="left:16.0px;top:359.0px;width:12px;text-align:right;font-size:11.500px;color:#5a5a5a">6</div>
<div class="abs" style="left:30.3px;top:358.0px;width:91px;height:52px;background:#fff;border:1px solid #858585;box-shadow:1px 1.500px 2px rgba(0,0,0,.4);overflow:hidden"><div class="abs" style="left:0;bottom:0;width:100%;height:2px;background:linear-gradient(90deg,#dff0fa 50%,#6cc04a)"></div><div class="t" style="left:31px;top:5px;font-size:3.6px;color:#5b9fd0;">Lorem &amp; Ipsum</div><svg style="left:36px;top:18px" width="18" height="18" viewBox="0 0 18 18"><path d="M9 0l2.500 6l6.500.5l-5 4l1.700 6.500l-5.700-3.700l-5.700 3.700l1.700-6.500l-5-4l6.500-.5z" fill="#4aa3e0"/></svg><div class="abs" style="left:23px;top:16px;width:7px;height:4.500px;border-radius:50%;transform:rotate(35deg);background:#b8dc4a"></div><div class="abs" style="left:60px;top:16px;width:7px;height:4.500px;border-radius:50%;transform:rotate(-35deg);background:#5fbf5a"></div><div class="abs" style="left:22px;top:34px;width:7px;height:4.500px;border-radius:50%;transform:rotate(35deg);background:#c6e24f"></div><div class="abs" style="left:59px;top:35px;width:7px;height:4.500px;border-radius:50%;transform:rotate(-35deg);background:#5a9fe0"></div><div class="abs" style="left:9px;top:18px;width:12px;height:1px;background:#888"></div><div class="abs" style="left:12px;top:20px;width:9px;height:1px;background:#888"></div><div class="abs" style="left:69px;top:18px;width:12px;height:1px;background:#888"></div><div class="abs" style="left:69px;top:20px;width:9px;height:1px;background:#888"></div><div class="abs" style="left:9px;top:36px;width:12px;height:1px;background:#888"></div><div class="abs" style="left:12px;top:38px;width:9px;height:1px;background:#888"></div><div class="abs" style="left:69px;top:36px;width:12px;height:1px;background:#888"></div><div class="abs" style="left:69px;top:38px;width:9px;height:1px;background:#888"></div></div>
<div class="t" style="left:16.0px;top:428.4px;width:12px;text-align:right;font-size:11.500px;color:#5a5a5a">7</div>
<div class="abs" style="left:30.3px;top:427.4px;width:91px;height:52px;background:#fff;border:1px solid #858585;box-shadow:1px 1.500px 2px rgba(0,0,0,.4);overflow:hidden"><div class="abs" style="inset:0;background:#1f84c8"></div><div class="abs" style="left:0;top:0;width:2px;height:100%;background:#dff0fa"></div><div class="t" style="left:31px;top:5px;font-size:3.6px;color:#fff;font-weight:bold">Lorem &amp; Ipsum</div><svg style="left:36px;top:18px" width="18" height="18" viewBox="0 0 18 18"><path d="M9 0l2.500 6l6.500.5l-5 4l1.700 6.500l-5.700-3.700l-5.700 3.700l1.700-6.500l-5-4l6.500-.5z" fill="#a8d8f4"/></svg><div class="abs" style="left:23px;top:16px;width:7px;height:4.500px;border-radius:50%;transform:rotate(35deg);background:#b8dc4a"></div><div class="abs" style="left:60px;top:16px;width:7px;height:4.500px;border-radius:50%;transform:rotate(-35deg);background:#5fbf5a"></div><div class="abs" style="left:22px;top:34px;width:7px;height:4.500px;border-radius:50%;transform:rotate(35deg);background:#c6e24f"></div><div class="abs" style="left:59px;top:35px;width:7px;height:4.500px;border-radius:50%;transform:rotate(-35deg);background:#5a9fe0"></div><div class="abs" style="left:9px;top:18px;width:12px;height:1px;background:#9fcbe8"></div><div class="abs" style="left:12px;top:20px;width:9px;height:1px;background:#9fcbe8"></div><div class="abs" style="left:69px;top:18px;width:12px;height:1px;background:#9fcbe8"></div><div class="abs" style="left:69px;top:20px;width:9px;height:1px;background:#9fcbe8"></div><div class="abs" style="left:9px;top:36px;width:12px;height:1px;background:#9fcbe8"></div><div class="abs" style="left:12px;top:38px;width:9px;height:1px;background:#9fcbe8"></div><div class="abs" style="left:69px;top:36px;width:12px;height:1px;background:#9fcbe8"></div><div class="abs" style="left:69px;top:38px;width:9px;height:1px;background:#9fcbe8"></div></div>
<div class="t" style="left:16.0px;top:497.7px;width:12px;text-align:right;font-size:11.500px;color:#5a5a5a">8</div>
<div class="abs" style="left:30.3px;top:496.7px;width:91px;height:52px;background:#fff;border:1px solid #858585;box-shadow:1px 1.500px 2px rgba(0,0,0,.4);overflow:hidden"><svg style="left:0;top:0" width="91" height="52" viewBox="0 0 91 52"><path d="M0 0h28c-2 14-12 26-28 32z" fill="#1f8ad8"/><path d="M0 32v20h8l4-4z" fill="#6cc04a"/></svg><div class="abs" style="right:1px;top:0;width:1.300px;height:100%;background:#7cc85a"></div><div class="t" style="left:31px;top:6px;font-size:3.6px;color:#5b9fd0;">Lorem &amp; Ipsum</div><div class="abs" style="left:18px;top:14px;width:6px;height:4.500px;border-radius:50%;transform:rotate(-30deg);background:#b8dc4a"></div><div class="abs" style="left:27px;top:15px;width:11px;height:1px;background:#777"></div><div class="abs" style="left:27px;top:17px;width:8px;height:1px;background:#aaa"></div><div class="abs" style="left:47px;top:14px;width:6px;height:4.500px;border-radius:50%;transform:rotate(-30deg);background:#4bbf5a"></div><div class="abs" style="left:56px;top:15px;width:11px;height:1px;background:#777"></div><div class="abs" style="left:56px;top:17px;width:8px;height:1px;background:#aaa"></div><div class="abs" style="left:18px;top:25px;width:6px;height:4.500px;border-radius:50%;transform:rotate(-30deg);background:#9ad33f"></div><div class="abs" style="left:27px;top:26px;width:11px;height:1px;background:#777"></div><div class="abs" style="left:27px;top:28px;width:8px;height:1px;background:#aaa"></div><div class="abs" style="left:47px;top:25px;width:6px;height:4.500px;border-radius:50%;transform:rotate(-30deg);background:#4a90d0"></div><div class="abs" style="left:56px;top:26px;width:11px;height:1px;background:#777"></div><div class="abs" style="left:56px;top:28px;width:8px;height:1px;background:#aaa"></div></div>
</div>
<svg style="left:14px;top:332px" width="16" height="18" viewBox="0 0 16 18"><path d="M3 2l1.500 2.500l2.500-1l-1 2.500l2 1.500l-2.500.5l-.5 2.500l-1.500-2l-2.500.5l1.500-2l-1.500-2l2.500.5z" fill="#f0a85a"/><path d="M6 4v11l2.500-2.500l2 4l1.500-.7l-2-4h3.500z" fill="#fff" stroke="#222" stroke-width=".9"/></svg>
<div class="abs" style="left:153px;top:129px;width:1px;height:575px;background:#dadada"></div>
<div class="abs" style="left:153px;top:382px;width:6px;height:68px;background:#1a1a1a"></div>
<svg style="left:153px;top:411px" width="6" height="10" viewBox="0 0 6 10"><path d="M5 1v8l-4.500-4z" fill="#fff"/></svg>
<div class="abs" style="left:173px;top:181px;width:816px;height:459px;background:#fff;border:1px solid #8a8a8a;overflow:hidden">
<svg style="right:0;top:0" width="24" height="459" viewBox="0 0 24 459"><defs><clipPath id="rbc"><path d="M3 0L24 0L24 459L19 459C18 400 17.500 330 17 313C16 250 14 180 12 143C9 90 5 40 3 0z"/></clipPath></defs><g clip-path="url(#rbc)"><rect width="24" height="459" fill="#2b8fdc"/><path d="M0 0h24v300c-3 6-6 12-8 22l-16 0z" fill="#4fc0a8"/><path d="M0 0h24v150c-4-2-9-6-12-12l-12 0z" fill="#5dca4d"/></g></svg>
</div>
<div class="t" style="left:454.0px;top:227.3px;font-size:37.100px;color:#1c80c4;letter-spacing:0px"><span style="text-decoration:underline wavy #e2566b;text-decoration-thickness:.8px;text-underline-offset:1px;">Lorem</span> &amp; <span style="text-decoration:underline wavy #e2566b;text-decoration-thickness:.8px;text-underline-offset:1px;">Ipsum</span></div>
<svg style="left:0;top:0" width="1344" height="726" viewBox="13 6 1344 726"><path d="M340.500 442.700C415 442.700 380 364.700 454.500 364.700M531 364.700C611 364.700 573 442.700 653 442.700M729 442.700C804 442.700 769 364.700 843.500 364.700" stroke="#8a8a8a" stroke-width="1.200" fill="none"/></svg>
<svg style="left:249.5px;top:399.0px" width="78" height="76" viewBox="0 0 78 76"><defs><linearGradient id="l1" x1="0" y1="0" x2="1" y2="1"><stop offset="0" stop-color="#c9e450"/><stop offset="1" stop-color="#a6cf42"/></linearGradient></defs><path d="M3 74.500C-3 52 3 18 32 8C50 2 66 2 76.500 .5C76 22 70 46 48 57C32 64 16 62 3 74.500z" fill="url(#l1)"/><g transform="translate(34.500 31) scale(1.2)" fill="#fff"><circle cx="0" cy="-10.500" r="2.200"/><path d="M-3.500 -7.500h7v9h-1.500v9.500h-1.700v-9.500h-.6v9.500h-1.700v-9.500h-1.500z"/></g></svg>
<svg style="left:439.5px;top:320.5px" width="78" height="76" viewBox="0 0 78 76"><defs><linearGradient id="l2" x1="0" y1="0" x2="1" y2="1"><stop offset="0" stop-color="#abdc40"/><stop offset="1" stop-color="#7cc044"/></linearGradient></defs><path d="M3 74.500C-3 52 3 18 32 8C50 2 66 2 76.500 .5C76 22 70 46 48 57C32 64 16 62 3 74.500z" fill="url(#l2)"/><g transform="translate(40.500 32) scale(1.200)" fill="#fff"><circle cx="0" cy="-10.500" r="2.200"/><path d="M-2 -7.500h4l3 10h-2.800v8.500h-1.600v-8.500h-1.200v8.500h-1.600v-8.500h-2.800z"/></g></svg>
<svg style="left:638.0px;top:399.0px" width="78" height="76" viewBox="0 0 78 76"><defs><linearGradient id="l3" x1="0" y1="0" x2="1" y2="1"><stop offset="0" stop-color="#5ed27a"/><stop offset="1" stop-color="#39ae80"/></linearGradient></defs><path d="M3 74.500C-3 52 3 18 32 8C50 2 66 2 76.500 .5C76 22 70 46 48 57C32 64 16 62 3 74.500z" fill="url(#l3)"/><path transform="translate(33 37)" d="M0 8C-12 0 -9-8 -4.500-8C-2-8 -.5-6.500 0-4.500C.5-6.500 2-8 4.500-8C9-8 12 0 0 8z" fill="#fff"/></svg>
<svg style="left:828.0px;top:320.5px" width="78" height="76" viewBox="0 0 78 76"><defs><linearGradient id="l4" x1="0" y1="0" x2="1" y2="1"><stop offset="0" stop-color="#68b4e8"/><stop offset="1" stop-color="#378ad0"/></linearGradient></defs><path d="M3 74.500C-3 52 3 18 32 8C50 2 66 2 76.500 .5C76 22 70 46 48 57C32 64 16 62 3 74.500z" fill="url(#l4)"/><g transform="translate(27 33) scale(1.200)" fill="#fff"><circle cx="0" cy="-10.500" r="2.200"/><path d="M-3.500 -7.500h7v9h-1.500v9.500h-1.700v-9.500h-.6v9.500h-1.700v-9.500h-1.500z"/></g><g transform="translate(43.500 33) scale(1.200)" fill="#fff"><circle cx="0" cy="-10.500" r="2.200"/><path d="M-2 -7.500h4l3 10h-2.800v8.500h-1.600v-8.500h-1.200v8.500h-1.600v-8.500h-2.800z"/></g></svg>
<div class="abs" style="left:226.5px;top:491.0px;width:23px;height:23px;border-radius:12px;background:#3ba4e6;color:#fff;font-size:16px;font-weight:bold;text-align:center;line-height:23px">1</div>
<div class="t b" style="left:258.0px;top:493.5px;font-size:13.500px;color:#1c80c4;text-decoration:underline wavy #e2566b;text-decoration-thickness:.8px;text-underline-offset:1px;">Lorem</div>
<div class="t" style="left:230.0px;top:524.5px;font-size:12.200px;line-height:13.200px;color:#333;white-space:normal;width:130px;text-decoration:underline wavy #e2566b;text-decoration-thickness:.8px;text-underline-offset:1px;">Lorem ipsum dolor sit<br>amet, consectetuer<br>adipiscing elit.</div>
<div class="abs" style="left:416.0px;top:412.5px;width:23px;height:23px;border-radius:12px;background:#3ba4e6;color:#fff;font-size:16px;font-weight:bold;text-align:center;line-height:23px">2</div>
<div class="t b" style="left:447.5px;top:415.0px;font-size:13.500px;color:#1c80c4;text-decoration:underline wavy #e2566b;text-decoration-thickness:.8px;text-underline-offset:1px;">Ipsum</div>
<div class="t" style="left:420.0px;top:446.0px;font-size:12.200px;line-height:13.200px;color:#333;white-space:normal;width:130px;text-decoration:underline wavy #e2566b;text-decoration-thickness:.8px;text-underline-offset:1px;">Lorem ipsum dolor sit<br>amet, consectetuer<br>adipiscing elit.</div>
<div class="abs" style="left:613.5px;top:491.0px;width:23px;height:23px;border-radius:12px;background:#3ba4e6;color:#fff;font-size:16px;font-weight:bold;text-align:center;line-height:23px">3</div>
<div class="t b" style="left:645.0px;top:493.5px;font-size:13.500px;color:#1c80c4;text-decoration:underline wavy #e2566b;text-decoration-thickness:.8px;text-underline-offset:1px;">Dolor</div>
<div class="t" style="left:617.0px;top:524.5px;font-size:12.200px;line-height:13.200px;color:#333;white-space:normal;width:130px;text-decoration:underline wavy #e2566b;text-decoration-thickness:.8px;text-underline-offset:1px;">Lorem ipsum dolor sit<br>amet, consectetuer<br>adipiscing elit.</div>
<div class="abs" style="left:803.5px;top:412.5px;width:23px;height:23px;border-radius:12px;background:#3ba4e6;color:#fff;font-size:16px;font-weight:bold;text-align:center;line-height:23px">4</div>
<div class="t b" style="left:835.0px;top:415.0px;font-size:13.500px;color:#1c80c4;text-decoration:underline wavy #e2566b;text-decoration-thickness:.8px;text-underline-offset:1px;">Sit</div>
<div class="t" style="left:807.0px;top:446.0px;font-size:12.200px;line-height:13.200px;color:#333;white-space:normal;width:130px;text-decoration:underline wavy #e2566b;text-decoration-thickness:.8px;text-underline-offset:1px;">Lorem ipsum dolor sit<br>amet, consectetuer<br>adipiscing elit.</div>
<div class="abs" style="left:1006px;top:242px;width:5px;height:300px;border-radius:3px;background:#a6a6a6"></div>
<div class="abs" style="left:440px;top:695px;width:400px;height:5px;border-radius:3px;background:#a6a6a6"></div>
<div class="abs" style="left:0;top:703px;width:1344px;height:23px;background:#f6f6f6;border-top:1px solid #d2d2d2"></div>
<div class="t" style="left:10px;top:710.5px;font-size:11.500px;color:#333">Folie 4 von 12</div>
<div class="abs" style="left:85px;top:707px;width:1px;height:17px;background:#d8d8d8"></div>
<div class="abs" style="left:404px;top:707px;width:1px;height:17px;background:#d8d8d8"></div>
<div class="t" style="left:412px;top:710.5px;font-size:11.500px;color:#333">Right Bar White</div>
<div class="abs" style="left:1015px;top:129px;width:1px;height:574px;background:#d0d0d0"></div>
<div class="abs" style="left:1014px;top:382px;width:6px;height:68px;background:#1a1a1a"></div>
<svg style="left:1014px;top:411px" width="6" height="10" viewBox="0 0 6 10"><path d="M1 1v8l4.500-4z" fill="#fff"/></svg>
<div class="abs" style="left:1024.0px;top:136.5px;width:1.500px;height:1.500px;background:#444"></div>
<div class="abs" style="left:1024.0px;top:140.2px;width:1.500px;height:1.500px;background:#444"></div>
<div class="abs" style="left:1024.0px;top:143.9px;width:1.500px;height:1.500px;background:#444"></div>
<div class="abs" style="left:1024.0px;top:147.6px;width:1.500px;height:1.500px;background:#444"></div>
<div class="t b" style="left:1032.5px;top:137.0px;font-size:12.3px;color:#222;">Eigenschaften</div>
<div class="t " style="left:1273.0px;top:137.0px;font-size:12px;color:#444;">?</div>
<svg style="left:1281px;top:138px" width="9" height="9" viewBox="0 0 9 9"><path d="M1 1l7 7M8 1l-7 7" stroke="#222" stroke-width="1.800"/></svg>
<div class="abs" style="left:1022px;top:155px;width:273px;height:560px;overflow:hidden;border-right:1px dashed #c8c8c8">
<div class="abs" style="left:0;top:.5px;width:273px;height:16.500px;background:#e6e6e6"></div>
<i class="dd" style="left:3px;top:5px;border-left-width:5.200px;border-right-width:5.200px;border-top-width:6px"></i><div class="t b" style="left:16.0px;top:3.0px;font-size:12.2px;color:#222;">Folie</div>
<div class="inp" style="left:92.3px;top:23.6px;width:200px;height:31px"></div>
<div class="t" style="left:0;width:87.0px;text-align:right;top:33.1px;font-size:12.500px;color:#555">Format:</div>
<div class="t " style="left:102.8px;top:33.1px;font-size:12.5px;color:#555;">Bildschirm 16:9</div>
<div class="inp" style="left:92.3px;top:58.3px;width:200px;height:31px"></div>
<div class="t" style="left:0;width:87.0px;text-align:right;top:67.8px;font-size:12.500px;color:#555">Ausrichtung:</div>
<div class="t " style="left:102.8px;top:67.8px;font-size:12.5px;color:#555;">Querformat</div>
<div class="inp" style="left:92.3px;top:93.0px;width:200px;height:31px"></div>
<div class="t" style="left:0;width:87.0px;text-align:right;top:102.5px;font-size:12.500px;color:#555">Hintergrund:</div>
<div class="t " style="left:102.8px;top:102.5px;font-size:12.5px;color:#555;">Ohne</div>
<div class="btn" style="left:92.3px;top:127.7px;width:200px;height:31px"></div>
<div class="t " style="left:160.0px;top:137.2px;font-size:12.5px;color:#555;">Bild einfügen…</div>
<div class="inp" style="left:92.3px;top:162.4px;width:200px;height:31px"></div>
<div class="t" style="left:0;width:87.0px;text-align:right;top:171.9px;font-size:12.500px;color:#555">Masterfolie:</div>
<div class="t " style="left:102.8px;top:171.9px;font-size:12.5px;color:#555;">Right Bar White</div>
<div class="abs" style="left:95.0px;top:199.6px;width:13px;height:13px;border-radius:2px;background:#2f9ad6"><svg style="left:0;top:0" width="13" height="13" viewBox="0 0 13 13"><path d="M3 6.500l2.500 2.500l4.500-5" stroke="#fff" stroke-width="1.700" fill="none"/></svg></div>
<div class="t " style="left:111.7px;top:200.1px;font-size:12.5px;color:#555;">Masterhintergrund</div>
<div class="abs" style="left:95.0px;top:222.2px;width:13px;height:13px;border-radius:2px;background:#2f9ad6"><svg style="left:0;top:0" width="13" height="13" viewBox="0 0 13 13"><path d="M3 6.500l2.500 2.500l4.500-5" stroke="#fff" stroke-width="1.700" fill="none"/></svg></div>
<div class="t " style="left:111.7px;top:222.7px;font-size:12.5px;color:#555;">Masterobjekte</div>
<div class="btn" style="left:92.3px;top:242.3px;width:200px;height:31px"></div>
<div class="t " style="left:164.0px;top:251.5px;font-size:12.5px;color:#555;">Masteransicht</div>
<div class="abs" style="left:0;top:280.5px;width:273px;height:16px;background:#e6e6e6"></div>
<i class="dd" style="left:3px;top:285px;border-left-width:5.200px;border-right-width:5.200px;border-top-width:6px"></i><div class="t b" style="left:16.0px;top:283.0px;font-size:12.2px;color:#222;">Layouts</div>
<div class="abs" style="left:167.0px;top:298px;width:84px;height:60px;border:1px solid #3b9fd8;background:#f8f8f8"></div>
<div class="abs" style="left:13.0px;top:317px;width:57.500px;height:40px;border:1px solid #666;background:#fff"></div>
<div class="abs" style="left:96.0px;top:317px;width:57.500px;height:40px;border:1px solid #666;background:#fff"><div class="abs" style="left:5px;top:3.500px;width:46px;height:7.500px;border:1px solid #888"></div><div class="abs" style="left:9px;top:6px;width:38px;height:2.500px;background:#2a78b5"></div><div class="abs" style="left:5px;top:14.500px;width:46px;height:30px;border:1px solid #888"></div><div class="abs" style="left:16px;top:21.500px;width:24px;height:2px;background:#2a78b5"></div></div>
<div class="abs" style="left:179.4px;top:317px;width:57.500px;height:40px;border:1px solid #666;background:#fff"><div class="abs" style="left:5px;top:3.500px;width:46px;height:7.500px;border:1px solid #888"></div><div class="abs" style="left:9px;top:6px;width:38px;height:2.500px;background:#2a78b5"></div><div class="abs" style="left:5px;top:14.500px;width:46px;height:30px;border:1px solid #888"></div></div>
<div class="abs" style="left:263.0px;top:317px;width:57.500px;height:40px;border:1px solid #666;background:#fff"><div class="abs" style="left:5px;top:3.500px;width:46px;height:7.500px;border:1px solid #888"></div><div class="abs" style="left:9px;top:6px;width:38px;height:2.500px;background:#2a78b5"></div><div class="abs" style="left:5px;top:14.500px;width:46px;height:30px;border:1px solid #888"></div></div>
</div>
<svg style="left:1310px;top:143px" width="14" height="12" viewBox="0 0 14 12"><path d="M0 1.500h14M0 6h14M0 10.500h14" stroke="#222" stroke-width="1.900"/></svg>
<div class="sel" style="left:1300px;top:174px;width:33.500px;height:33px;border-radius:3px"></div>
<svg class="ic" style="left:1304.5px;top:178.0px" viewBox="0 0 24 24"><rect x="3.5" y="3.5" width="17" height="17" stroke="#3a3a38" fill="#fff" stroke-width="1.2" /><rect x="3.5" y="3.5" width="17" height="1.5" stroke="#3a3a38" fill="#3a3a38" stroke-width="1" /><path d="M6.500 11.500h11M6.500 15.500h11" stroke="#1e6fa8" fill="none" stroke-width="1.1" /><rect x="13" y="10" width="2" height="3" stroke="#1e6fa8" fill="#1e6fa8" stroke-width="0.5" /><rect x="9" y="14" width="2" height="3" stroke="#1e6fa8" fill="#1e6fa8" stroke-width="0.5" /></svg>
<svg class="ic" style="left:1304.5px;top:220.0px" viewBox="0 0 24 24"><text x="2" y="17" font-size="19" fill="#3a3a38" font-family="Liberation Sans,sans-serif">A</text><path d="M12.500 17l7.500-9c1-1 2.500 0 1.800 1.300l-6.800 9.200z" stroke="#3a3a38" fill="#fff" stroke-width="1" /><path d="M9.500 21.500c0-3 1.500-4.500 3.500-4l1.500 1.500c.5 2-2 3.500-5 2.500z" stroke="#1e6fa8" fill="#83beec" stroke-width="1" /></svg>
<svg class="ic" style="left:1304.5px;top:262.0px" viewBox="0 0 24 24"><path d="M2.500 18.500v-14h6l2 2.500h9v3" stroke="#e8a93a" fill="#fbe6b0" stroke-width="1" /><path d="M2.500 18.500v-8h7v8z" stroke="#e8a93a" fill="#f8d683" stroke-width="1" /><rect x="9.5" y="11.5" width="12" height="10" stroke="#1e5f90" fill="#fff" stroke-width="1.2" /><path d="M10 21l3.500-4l2 2l2.500-3l3 3v2z" stroke="#1e8bcd" fill="#83beec" stroke-width="1" /><circle cx="13" cy="14.5" r="1" stroke="#e8a93a" fill="#f8db8f" stroke-width="0.6"/></svg>
<svg class="ic" style="left:1304.5px;top:304.5px" viewBox="0 0 24 24"><circle cx="12" cy="12" r="9" stroke="#3a6f90" fill="#fff" stroke-width="1.2"/><path d="M16.500 7.500l-2.500 6.500l-6.500 2.500l2.500-6.500z" stroke="#1e6fa8" fill="#1e6fa8" stroke-width="1" /><circle cx="12" cy="12" r="1.2" stroke="#fff" fill="#fff" stroke-width="0"/></svg>
<svg class="ic" style="left:1304.5px;top:347.0px" viewBox="0 0 24 24"><rect x="3.5" y="8.5" width="9" height="10" stroke="#3a3a38" fill="#fff" stroke-width="1.2" /><circle cx="15.5" cy="7.5" r="5" stroke="#3a3a38" fill="#fff" stroke-width="1.2"/><path d="M14 8.500l6 6l-6 6l-6-6z" stroke="#3a3a38" fill="#fff" stroke-width="1.2" /></svg>
<svg class="ic" style="left:1304.5px;top:389.5px" viewBox="0 0 24 24"><path d="M8.500 4.500h12M8.500 4.500v14h12" stroke="#3a3a38" fill="none" stroke-width="1.2" /><path d="M11 9.500h9" stroke="#1e6fa8" fill="none" stroke-width="1.5" /><path d="M2.500 5.500h4M2.500 8.500h4M2.500 11.500h4M2.500 14.500h4M2.500 17.500h4" stroke="#f0a85a" fill="none" stroke-width="1" /></svg>
<svg class="ic" style="left:1304.5px;top:431.0px" viewBox="0 0 24 24"><path d="M9 3.500l2.200 5l5.300.5l-4 3.500l1.200 5.500l-4.700-2.900l-4.700 2.900l1.200-5.500l-4-3.500l5.300-.5z" stroke="#e8a93a" fill="#f8db8f" stroke-width="1.2" /><path d="M14 6.500h7M16.500 9.500h5M16 12.500h5M14.500 15.500h6" stroke="#f0a85a" fill="none" stroke-width="1" /></svg>
<svg class="ic" style="left:1304.5px;top:473.0px" viewBox="0 0 24 24"><rect x="2.5" y="4.5" width="19" height="15" stroke="#155a86" fill="#5cb0e6" stroke-width="1.2" /><rect x="4.5" y="6.5" width="15" height="2.5" stroke="#1b75b0" fill="#dff0fb" stroke-width="1" /><rect x="4.5" y="11.5" width="15" height="6" stroke="#1b75b0" fill="#1e7fc0" stroke-width="1" /></svg>
</div>
<div class="win" id="calc" style="left:481px;top:504px;width:1005px;height:573px">
<div class="tbar" style="height:57px"></div>
<div class="t " style="left:414.0px;top:9.5px;font-size:12.6px;color:#333;">Unbenannt 2 – LibreOffice Calc</div>
<div class="abs" style="left:932.0px;top:17.6px;width:8.0px;height:1.4px;background:#555"></div>
<div class="abs" style="left:958.0px;top:12.0px;width:8.0px;height:8.0px;border:1.500px solid #444"></div>
<svg style="left:978px;top:6px" width="20" height="20" viewBox="0 0 20 20"><circle cx="10.500" cy="9.800" r="8.300" fill="#2f9fdc"/><path d="M7.500 6.800l6 6M13.500 6.800l-6 6" stroke="#fff" stroke-width="2.200" stroke-linecap="round"/></svg>
<div class="t " style="left:8.0px;top:38.0px;font-size:12.6px;color:#444;">Datei</div>
<div class="t " style="left:52.0px;top:38.0px;font-size:12.6px;color:#444;">Bearbeiten</div>
<div class="t " style="left:128.0px;top:38.0px;font-size:12.6px;color:#444;">Ansicht</div>
<div class="t " style="left:185.0px;top:38.0px;font-size:12.6px;color:#444;">Einfügen</div>
<div class="t " style="left:251.0px;top:38.0px;font-size:12.6px;color:#444;">Format</div>
<div class="t " style="left:307.0px;top:38.0px;font-size:12.6px;color:#444;">Formatvorlagen</div>
<div class="t " style="left:413.0px;top:38.0px;font-size:12.6px;color:#444;">Tabelle</div>
<div class="t " style="left:467.0px;top:38.0px;font-size:12.6px;color:#444;">Daten</div>
<div class="t " style="left:516.0px;top:38.0px;font-size:12.6px;color:#444;">Extras</div>
<div class="t " style="left:566.0px;top:38.0px;font-size:12.6px;color:#444;">Fenster</div>
<div class="t " style="left:624.0px;top:38.0px;font-size:12.6px;color:#444;">Hilfe</div>
<svg class="ic" style="left:6.5px;top:63.0px" viewBox="0 0 24 24"><path d="M4.500 3.500h10l5 5v12h-15z" stroke="#43a06a" fill="#f3fbf6" stroke-width="1" /><path d="M14.500 3.500v5h5" stroke="#43a06a" fill="#d8f0e2" stroke-width="1" /><rect x="6.5" y="10.5" width="10" height="8" stroke="#2e8b57" fill="#bfe8cf" stroke-width="0.9" /><path d="M6.500 13h10M6.500 15.700h10M10 10.500v8M13.300 10.500v8" stroke="#2e8b57" fill="none" stroke-width="0.9" /></svg>
<svg class="ic" style="left:47.6px;top:63.0px" viewBox="0 0 24 24"><path d="M2.5 19.5v-15h6l2 2.5h8.5v3" stroke="#e8a93a" fill="#fbe6b0" stroke-width="1" /><path d="M2.5 19.5l3-9.5h16.5l-3 9.5z" stroke="#e8a93a" fill="#f8d683" stroke-width="1" /></svg>
<svg class="ic" style="left:89.0px;top:63.0px" viewBox="0 0 24 24"><path d="M3.5 3.5h15l2 2v15h-17z" stroke="#b653c0" fill="#e4a3ea" stroke-width="1" /><rect x="6.5" y="3.5" width="10.5" height="6" stroke="#b653c0" fill="#fbeefc" stroke-width="1" /><rect x="7.5" y="13.5" width="9" height="7" stroke="#b653c0" fill="#fbeefc" stroke-width="1" /><rect x="9.5" y="15" width="2.5" height="4" stroke="#7b2d86" fill="#7b2d86" stroke-width="1" /><circle cx="18.5" cy="18.5" r="3.3" stroke="#e0455a" fill="#f06a78" stroke-width="1"/></svg>
<svg class="ic" style="left:141.0px;top:63.0px" viewBox="0 0 24 24"><path d="M5.5 3.5h8l5 5v12h-13z" stroke="#3a3a38" fill="#fff" stroke-width="1" /><path d="M13.5 3.5v5h5" stroke="#3a3a38" fill="#fff" stroke-width="1" /><path d="M11 20c3-3 4-7 3.5-9.5c-.5-1.5-2-.5-1 2c1 3 4 5.5 7 6c2 0 1.5-2-1-2c-3 0-7 1.5-8.500 3.5z" stroke="#e0455a" fill="none" stroke-width="1" /></svg>
<svg class="ic" style="left:170.5px;top:63.0px" viewBox="0 0 24 24"><rect x="7.5" y="3.5" width="9" height="5" stroke="#1e8bcd" fill="#9fd0f0" stroke-width="1" /><path d="M2.5 8.5h19v9h-19z" stroke="#4d5157" fill="#5d6168" stroke-width="1" /><rect x="6.5" y="13.5" width="11" height="7" stroke="#4d5157" fill="#fff" stroke-width="1" /><path d="M8.5 16h7M8.5 18h7" stroke="#b0b0b0" fill="none" stroke-width="1" /></svg>
<svg class="ic" style="left:202.0px;top:63.0px" viewBox="0 0 24 24"><path d="M4.500 3.500h9l5 5v12h-14z" stroke="#3a3a38" fill="#fff" stroke-width="1" /><path d="M13.500 3.500v5h5" stroke="#3a3a38" fill="#fff" stroke-width="1" /><circle cx="14" cy="15" r="4" stroke="#2a78b5" fill="#eaf5fc" stroke-width="1.2"/><path d="M17 18l4 4" stroke="#4aa3d8" fill="none" stroke-width="1.6" /></svg>
<svg class="ic" style="left:239.5px;top:63.0px" viewBox="0 0 24 24"><path d="M8 3l6.5 12M16 3L9.500 15" stroke="#3a3a38" fill="none" stroke-width="1.5" /><circle cx="7" cy="18" r="2.5" stroke="#4aa3d8" fill="#eaf5fc" stroke-width="1.2"/><circle cx="17" cy="18" r="2.5" stroke="#4aa3d8" fill="#eaf5fc" stroke-width="1.2"/></svg>
<svg class="ic" style="left:270.8px;top:63.0px" viewBox="0 0 24 24"><path d="M3.500 2.500h6l3 3v10h-9z" stroke="#3a3a38" fill="#fff" stroke-width="1" /><path d="M5.5 6h4M5.500 8.500h5M5.500 11h5" stroke="#3a3a38" fill="none" stroke-width="1" /><path d="M10.5 8.500h6l3 3v10h-9z" stroke="#3a3a38" fill="#fff" stroke-width="1" /><path d="M16.5 8.500v3h3" stroke="#3a3a38" fill="none" stroke-width="1" /><path d="M12.500 14h5M12.500 16.500h5M12.500 19h5" stroke="#3a3a38" fill="none" stroke-width="1" /></svg>
<svg class="ic" style="left:301.0px;top:63.0px" viewBox="0 0 24 24"><path d="M3.500 5.500h13v14h-13z" stroke="#b9b9b9" fill="#dcdcdc" stroke-width="1" /><rect x="7" y="3" width="6" height="4" stroke="#b9b9b9" fill="#ececec" stroke-width="1" /><path d="M11.500 10.500h6l3 3v8h-9z" stroke="#b9b9b9" fill="#e9e9e9" stroke-width="1" /><path d="M17.5 10.500v3h3" stroke="#b9b9b9" fill="none" stroke-width="1" /></svg>
<svg class="ic" style="left:349.9px;top:63.0px" viewBox="0 0 24 24"><path d="M10.500 2.500h3v7.500h-3z" stroke="#3a3a38" fill="#fff" stroke-width="1" /><path d="M10.500 5a1.500 1.500 0 0 1 3 0" stroke="#3a3a38" fill="none" stroke-width="1" /><path d="M7.500 10.500h9v4h-9z" stroke="#3a3a38" fill="#fff" stroke-width="1" /><path d="M6.500 14.500h11l1 7h-13z" stroke="#e8a05a" fill="#fbd9a8" stroke-width="1" /><path d="M6 17.500h12" stroke="#e8a05a" fill="none" stroke-width="1" /></svg>
<svg class="ic" style="left:380.8px;top:63.0px" viewBox="0 0 24 24"><text x="3" y="15" font-size="17" fill="#3a3a38" font-family="Liberation Sans,sans-serif">A</text><path d="M2.500 18.500h9" stroke="#4aa3d8" fill="none" stroke-width="1.2" /><path d="M12 17.500l6-6l4 4l-6 6z" stroke="#c8283a" fill="#e8485a" stroke-width="1" /></svg>
<svg class="ic" style="left:417.4px;top:63.0px" viewBox="0 0 24 24"><path d="M4.500 4.500v7h7" stroke="#2a78b5" fill="none" stroke-width="1.3" /><path d="M4.500 11.500c2.500-5.500 8-7.500 11.500-5c3.500 2.500 3.500 8-1.500 13" stroke="#4a98d0" fill="none" stroke-width="1.3" /></svg>
<svg class="ic" style="left:459.5px;top:63.0px" viewBox="0 0 24 24"><path d="M19.500 4.500v7h-7" stroke="#4a98d0" fill="none" stroke-width="1.3" /><path d="M19.500 11.500c-2.500-5.500-8-7.500-11.500-5c-3.500 2.500-3.500 8 1.500 13" stroke="#4a98d0" fill="none" stroke-width="1.3" /></svg>
<svg class="ic" style="left:510.3px;top:63.0px" viewBox="0 0 24 24"><circle cx="11" cy="8.5" r="6" stroke="#3a3a38" fill="#fff" stroke-width="1.2"/><path d="M7 13l-5.500 6.500" stroke="#3a3a38" fill="none" stroke-width="2" /><text x="7.800" y="12.300" font-size="11.500" fill="#1e8bcd" font-family="Liberation Sans,sans-serif">a</text><text x="15.500" y="22" font-size="12.500" fill="#3a3a38" font-family="Liberation Sans,sans-serif">d</text></svg>
<svg class="ic" style="left:540.2px;top:63.0px" viewBox="0 0 24 24"><text x="1.500" y="11.500" font-size="12.500" fill="#3a3a38" font-family="Liberation Sans,sans-serif">abc</text><path d="M8.500 18l3.500 3.500l8-8" stroke="#3fae6a" fill="none" stroke-width="1.5" /></svg>
<svg class="ic" style="left:577.8px;top:63.0px" viewBox="0 0 24 24"><rect x="2.5" y="2.5" width="19" height="19" stroke="#555" fill="#fff" stroke-width="1" /><rect x="2.5" y="7.5" width="19" height="5" stroke="none" fill="#4aa8ea" stroke-width="0" /><path d="M2.500 7.500h19M2.500 12.500h19M2.500 17.500h19M7.500 2.500v19M12 2.500v19M16.500 2.500v19" stroke="#555" fill="none" stroke-width="0.9" /></svg>
<svg class="ic" style="left:618.9px;top:63.0px" viewBox="0 0 24 24"><rect x="2.5" y="2.5" width="19" height="19" stroke="#555" fill="#fff" stroke-width="1" /><rect x="7.5" y="2.5" width="4.5" height="19" stroke="none" fill="#4aa8ea" stroke-width="0" /><path d="M2.500 7.500h19M2.500 12.500h19M2.500 17.500h19M7.500 2.500v19M12 2.500v19M16.500 2.500v19" stroke="#555" fill="none" stroke-width="0.9" /></svg>
<svg class="ic" style="left:668.6px;top:63.0px" viewBox="0 0 24 24"><rect x="1.5" y="2.5" width="21" height="20" stroke="#3a3a38" fill="#fff" stroke-width="1" /><path d="M1.500 3h21" stroke="#3a3a38" fill="none" stroke-width="1.5" /><line x1="12" y1="2.5" x2="12" y2="22.5" stroke="#3a3a38" stroke-width="1" /><text x="3.5" y="11.5" font-size="9" fill="#2a78b5" font-family="Liberation Sans,sans-serif">A</text><text x="3.5" y="21" font-size="9" fill="#c0509a" font-family="Liberation Sans,sans-serif">Z</text><text x="13.5" y="11.5" font-size="9" fill="#c0509a" font-family="Liberation Sans,sans-serif">Z</text><text x="13.5" y="21" font-size="9" fill="#2a78b5" font-family="Liberation Sans,sans-serif">A</text></svg>
<svg class="ic" style="left:700.3px;top:63.0px" viewBox="0 0 24 24"><text x="2" y="10.5" font-size="10" fill="#2a78b5" font-family="Liberation Sans,sans-serif">A</text><text x="2" y="21.5" font-size="10" fill="#c0509a" font-family="Liberation Sans,sans-serif">Z</text><path d="M17.500 3v16M13.500 15l4 4.500l4-4.500" stroke="#555" fill="none" stroke-width="1.2" /></svg>
<svg class="ic" style="left:731.5px;top:63.0px" viewBox="0 0 24 24"><text x="2" y="10.5" font-size="10" fill="#c0509a" font-family="Liberation Sans,sans-serif">Z</text><text x="2" y="21.5" font-size="10" fill="#2a78b5" font-family="Liberation Sans,sans-serif">A</text><path d="M17.500 3v16M13.500 15l4 4.500l4-4.500" stroke="#555" fill="none" stroke-width="1.2" /></svg>
<svg class="ic" style="left:762.7px;top:63.0px" viewBox="0 0 24 24"><path d="M2.500 3.500h17l-6.500 8v6l-4 3v-9z" stroke="#3a3a38" fill="#fff" stroke-width="1.1" /><path d="M18 9.500l-5 7h3.500l-2.500 6l7-8h-3.500l2.500-5z" stroke="#e8912a" fill="#f5b04a" stroke-width="0.8" /></svg>
<svg class="ic" style="left:800.5px;top:63.0px" viewBox="0 0 24 24"><rect x="2.5" y="2.5" width="19" height="19" stroke="#3a3a38" fill="#fff" stroke-width="1" /><path d="M3 21l6-8l4 4l4-6l4.500 5v5z" stroke="#1e8bcd" fill="#83beec" stroke-width="1" /><circle cx="7.5" cy="7.5" r="2" stroke="#e8a93a" fill="#f8db8f" stroke-width="1"/></svg>
<svg class="ic" style="left:830.6px;top:63.0px" viewBox="0 0 24 24"><rect x="3.5" y="8.5" width="3.5" height="12" stroke="#1e8bcd" fill="#83beec" stroke-width="1" /><rect x="10.5" y="3.5" width="3.5" height="17" stroke="#e8a93a" fill="#f8db8f" stroke-width="1" /><rect x="17.5" y="10.5" width="3" height="10" stroke="#4d5157" fill="#6a6e74" stroke-width="1" /></svg>
<svg class="ic" style="left:862.5px;top:63.0px" viewBox="0 0 24 24"><rect x="2.5" y="2.5" width="19" height="19" stroke="#555" fill="#e9eef2" stroke-width="1" /><rect x="5" y="5" width="14" height="14" stroke="none" fill="#fff" stroke-width="0" /><path d="M2.500 5.500h19M5.500 2.500v19" stroke="#555" fill="none" stroke-width="0.9" /><path d="M8.500 17.500c0-5 3-8 8-8M14.500 7.500l2.500 2l-2.500 2M6.500 15l2 2.500l2-2.500" stroke="#2a78b5" fill="none" stroke-width="1.1" /><rect x="7" y="3" width="3" height="1.5" stroke="none" fill="#2a78b5" stroke-width="0" /></svg>
<svg class="ic" style="left:898.3px;top:63.0px" viewBox="0 0 24 24"><path d="M3.500 20.500h5v-2c-3-1.500-4.500-4-4.500-7a8 8 0 0 1 16 0c0 3-1.500 5.500-4.500 7v2h5" stroke="#555" fill="none" stroke-width="1.3" /></svg>
<svg class="ic" style="left:942.3px;top:63.0px" viewBox="0 0 24 24"><circle cx="12" cy="8.5" r="6" stroke="#3a3a38" fill="#fff" stroke-width="0.9"/><ellipse cx="12" cy="8.5" rx="2.8" ry="6" stroke="#3a3a38" fill="none" stroke-width="0.8"/><path d="M6 8.500h12M12 2.500v12M7 5.500h10M7 11.500h10" stroke="#3a3a38" fill="none" stroke-width="0.8" /><rect x="4.5" y="15.5" width="7" height="5" stroke="#4aa3d8" fill="#fff" stroke-width="1.2" rx="2.500"/><rect x="12.5" y="15.5" width="7" height="5" stroke="#4aa3d8" fill="#fff" stroke-width="1.2" rx="2.500"/><line x1="9" y1="18" x2="15" y2="18" stroke="#4aa3d8" stroke-width="1.2" /></svg>
<i class="dd" style="left:36.0px;top:75.0px"></i>
<i class="dd" style="left:77.3px;top:75.0px"></i>
<i class="dd" style="left:118.5px;top:75.0px"></i>
<i class="dd" style="left:447.5px;top:75.0px"></i>
<i class="dd" style="left:488.5px;top:75.0px"></i>
<i class="dd" style="left:606.7px;top:75.0px"></i>
<i class="dd" style="left:648.0px;top:75.0px"></i>
<i class="dd" style="left:928.1px;top:75.0px"></i>
<i class="dd g" style="left:329.3px;top:75.0px"></i>
<div class="t " style="left:991.0px;top:64.0px;font-size:22px;color:#333;">»</div>
<div class="inp" style="left:4.7px;top:96.0px;width:171.0px;height:31.0px;"></div>
<div class="abs" style="left:141.3px;top:97.0px;width:1.0px;height:29.0px;background:#dcdcdc"></div>
<div class="abs" style="left:142.3px;top:97.0px;width:32.5px;height:29.0px;background:#f7f7f7;border-radius:0 3px 3px 0"></div>
<div class="t " style="left:13.0px;top:105.8px;font-size:12.5px;color:#555;">Liberation Sans</div>
<i class="dd" style="left:154.5px;top:108.5px;border-left-width:6px;border-right-width:6px;border-top-width:6px"></i>
<div class="inp" style="left:184.7px;top:96.0px;width:96.0px;height:31.0px;"></div>
<div class="abs" style="left:245.0px;top:97.0px;width:1.0px;height:29.0px;background:#dcdcdc"></div>
<div class="abs" style="left:246.0px;top:97.0px;width:33.5px;height:29.0px;background:#f7f7f7;border-radius:0 3px 3px 0"></div>
<div class="t " style="left:193.3px;top:105.8px;font-size:12.5px;color:#555;">10 pt</div>
<i class="dd" style="left:258.0px;top:108.5px;border-left-width:6px;border-right-width:6px;border-top-width:6px"></i>
<div class="t b" style="left:298.5px;top:102.0px;font-size:19px;color:#1a1a1a;transform:scaleX(.92);transform-origin:0 0">F</div>
<div class="t " style="left:328.0px;top:102.0px;font-size:19px;color:#1a1a1a;font-style:italic">K</div>
<div class="t " style="left:357.5px;top:102.0px;font-size:19px;color:#1a1a1a;text-decoration:underline;text-decoration-thickness:1.200px;text-underline-offset:2.500px;text-decoration-color:#2a78b5">U</div>
<svg class="ic" style="left:400.8px;top:99.0px" viewBox="0 0 24 24"><text x="4.500" y="15.500" font-size="18" fill="#3a3a38" font-family="Liberation Sans,sans-serif">A</text><rect x="1" y="18" width="22" height="5" stroke="none" fill="#c11f28" stroke-width="1" /></svg>
<svg class="ic" style="left:442.0px;top:99.0px" viewBox="0 0 24 24"><path d="M4.500 10v-5.500M4.500 4.500l-2 2M4.500 4.500h5" stroke="#2a78b5" fill="none" stroke-width="1.3" /><path d="M8 7.500l8-3.500l3.500 8.500l-8 3.500z" stroke="#3a3a38" fill="#fff" stroke-width="1.2" /><path d="M12.500 6c-.5-3 .5-5 2-5s2 2 1.500 4" stroke="#3a3a38" fill="none" stroke-width="1.2" /><rect x="2" y="18" width="21" height="5" stroke="none" fill="#f7f022" stroke-width="0" rx="1.500"/></svg>
<svg class="ic" style="left:492.4px;top:99.0px" viewBox="0 0 24 24"><path d="M3 4.5h17.5M3 8.1h11M3 11.7h17.5M3 15.3h10M3 18.9h17.5M3 22.5h11" stroke="#3a3a38" fill="none" stroke-width="1" /></svg>
<svg class="ic" style="left:523.5px;top:99.0px" viewBox="0 0 24 24"><path d="M3.5 4.5h17.0M6.5 8.1h11.0M3.5 11.7h17.0M6.5 15.3h11.0M3.5 18.9h17.0M6.5 22.5h11.0" stroke="#3a3a38" fill="none" stroke-width="1" /></svg>
<svg class="ic" style="left:554.7px;top:99.0px" viewBox="0 0 24 24"><path d="M3.5 4.5h17.5M10 8.1h11M3.5 11.7h17.5M11 15.3h10M3.5 18.9h17.5M10 22.5h11" stroke="#3a3a38" fill="none" stroke-width="1" /></svg>
<svg class="ic" style="left:592.8px;top:99.0px" viewBox="0 0 24 24"><path d="M3 4.500h18M3 8.500h18M3 12.500h18" stroke="#3a3a38" fill="none" stroke-width="1.1" /><path d="M12 22v-7M9 18l3-3l3 3" stroke="#2a78b5" fill="none" stroke-width="1.1" /></svg>
<svg class="ic" style="left:623.9px;top:99.0px" viewBox="0 0 24 24"><path d="M3 12.500h18" stroke="#3a3a38" fill="none" stroke-width="1.1" /><path d="M12 2.500v7M9 6.500l3 3l3-3M12 22.500v-7M9 18.500l3-3l3 3" stroke="#2a78b5" fill="none" stroke-width="1.1" /></svg>
<svg class="ic" style="left:655.0px;top:99.0px" viewBox="0 0 24 24"><path d="M3 12.500h18M3 16.500h18M3 20.500h18" stroke="#3a3a38" fill="none" stroke-width="1.1" /><path d="M12 2.500v7M9 6.500l3 3l3-3" stroke="#2a78b5" fill="none" stroke-width="1.1" /></svg>
<svg class="ic" style="left:693.7px;top:99.0px" viewBox="0 0 24 24"><path d="M3 4.500h18M3 8.500h12M3 12.500h10M3 20.500h18" stroke="#3a3a38" fill="none" stroke-width="1.1" /><path d="M14 12.500c4 0 6 2 6 5.500M17 15.500l3 3l2-3.500" stroke="#2a78b5" fill="none" stroke-width="1.1" /></svg>
<svg class="ic" style="left:731.8px;top:99.0px" viewBox="0 0 24 24"><rect x="2.5" y="3.5" width="19" height="17" stroke="#3a3a38" fill="#fff" stroke-width="1" /><path d="M2.500 7.500h19M2.500 16.500h19M8.500 3.500v4M15.500 3.500v4M8.500 16.500v4M15.500 16.500v4" stroke="#3a3a38" fill="none" stroke-width="0.9" /><path d="M5 12h14M5 12l2.500-2M5 12l2.500 2M19 12l-2.500-2M19 12l-2.500 2" stroke="#2a78b5" fill="none" stroke-width="1" /><rect x="2.5" y="7.5" width="19" height="9" stroke="#2a78b5" fill="none" stroke-width="0.9" /></svg>
<svg class="ic" style="left:762.7px;top:99.0px" viewBox="0 0 24 24"><rect x="2.5" y="3.5" width="19" height="17" stroke="#3a3a38" fill="#fff" stroke-width="1" /><path d="M2.500 7.500h19M2.500 16.500h19M8.500 3.500v4M15.500 3.500v4M8.500 16.500v4M15.500 16.500v4" stroke="#3a3a38" fill="none" stroke-width="0.9" /><rect x="2.5" y="7.5" width="19" height="9" stroke="#2a78b5" fill="none" stroke-width="0.9" /><path d="M2.500 3.500h19" stroke="#c0604a" fill="none" stroke-width="1" /></svg>
<svg class="ic" style="left:793.7px;top:99.0px" viewBox="0 0 24 24"><rect x="2.5" y="3.5" width="19" height="17" stroke="#b5b5b5" fill="#e2e2e2" stroke-width="1" /><path d="M2.500 7.500h19M2.500 16.500h19M8.500 3.500v4M15.500 3.500v4M8.500 16.500v4M15.500 16.500v4" stroke="#b5b5b5" fill="none" stroke-width="0.9" /><path d="M8.500 7.500v9M15.500 7.500v9" stroke="#b5b5b5" fill="none" stroke-width="0.9" /></svg>
<svg class="ic" style="left:830.3px;top:99.0px" viewBox="0 0 24 24"><path d="M2.500 16.500v-12h19v9" stroke="#3a3a38" fill="none" stroke-width="1.1" /><circle cx="11" cy="10" r="2" stroke="#3a3a38" fill="#3a3a38" stroke-width="1"/><path d="M6.500 15.500h5v5h-5zM6.500 18h5M12.500 13.500h4.500v7h-4.500zM12.500 16h4.500M12.500 18.300h4.500M18 11.500h4v9h-4zM18 14h4M18 16.200h4M18 18.400h4" stroke="#3a3a38" fill="#fff" stroke-width="0.9" /></svg>
<svg class="ic" style="left:873.5px;top:99.0px" viewBox="0 0 24 24"><text x="2.500" y="19.500" font-size="21" fill="#3a3a38" font-family="Liberation Sans,sans-serif">%</text></svg>
<svg class="ic" style="left:905.8px;top:99.0px" viewBox="0 0 24 24"><text x="0" y="19" font-size="19" letter-spacing="-1.500" fill="#3a3a38" font-family="Liberation Sans,sans-serif">0,0</text></svg>
<svg class="ic" style="left:935.5px;top:99.0px" viewBox="0 0 24 24"><rect x="3.5" y="4.5" width="17" height="16" stroke="#3a3a38" fill="#fff" stroke-width="1.1" /><path d="M3.500 5.500h17" stroke="#3a3a38" fill="none" stroke-width="2" /><path d="M7.500 2.500v4M16.500 2.500v4" stroke="#3a3a38" fill="none" stroke-width="1.3" /><text x="8.500" y="18.500" font-size="11" fill="#3a3a38" font-family="Liberation Sans,sans-serif">7</text></svg>
<i class="dd" style="left:381.8px;top:111.0px"></i>
<i class="dd" style="left:430.5px;top:111.0px"></i>
<i class="dd" style="left:471.8px;top:111.0px"></i>
<i class="dd" style="left:859.9px;top:111.0px"></i>
<div class="t " style="left:991.0px;top:100.0px;font-size:22px;color:#333;">»</div>
<div class="inp" style="left:4.7px;top:132.7px;width:134.0px;height:31.0px;"></div>
<div class="abs" style="left:103.3px;top:133.7px;width:1.0px;height:29.0px;background:#dcdcdc"></div>
<div class="abs" style="left:104.3px;top:133.7px;width:33.4px;height:29.0px;background:#f7f7f7;border-radius:0 3px 3px 0"></div>
<div class="t " style="left:13.0px;top:142.6px;font-size:12.5px;color:#555;">B3:E8</div>
<i class="dd" style="left:117.0px;top:145.0px;border-left-width:6px;border-right-width:6px;border-top-width:6px"></i>
<div class="t" style="left:152.0px;top:138.0px;font-size:18px;color:#3a88c4;font-family:'Liberation Serif',serif;font-style:italic">fx</div>
<div class="t" style="left:174.0px;top:137.5px;font-size:19px;color:#333;font-family:'Liberation Serif',serif">Σ</div>
<i class="dd" style="left:194.5px;top:148.0px"></i>
<div class="t " style="left:210.0px;top:135.5px;font-size:22px;color:#222;">=</div>
<div class="abs" style="left:227.5px;top:139.0px;width:700.0px;height:19.0px;background:#fff;border:1px solid #dcdcdc;border-left:none;border-right:none"></div>
<i class="dd" style="left:930.0px;top:145.0px;border-left-width:6px;border-right-width:6px;border-top-width:6px"></i>
<div class="abs" style="left:0;top:170px;width:937px;height:349px;background:#fff;overflow:hidden">
<svg style="left:0;top:0" width="937" height="349" viewBox="481 674 937 349" shape-rendering="crispEdges"><rect x="481" y="674" width="937" height="15.400" fill="#f6f6f6"/><rect x="481" y="689" width="30.700" height="349" fill="#f3f3f3"/><rect x="588.500" y="674" width="307.700" height="14.500" fill="#229ad8"/><rect x="481" y="720.500" width="30.700" height="96" fill="#229ad8"/><rect x="588.500" y="720.500" width="307.700" height="96" fill="#c4e2f3"/><path d="M588.5 689v349M665.5 689v349M742.5 689v349M819.5 689v349M896.5 689v349M973.5 689v349M1050.5 689v349M1127.5 689v349M1203.5 689v349M1280.5 689v349M1357.5 689v349M1434.5 689v349" stroke="#c6c6c6" stroke-width="1" fill="none"/><path d="M511 688.5h937M511 704.5h937M511 720.5h937M511 736.5h937M511 752.5h937M511 768.5h937M511 784.5h937M511 800.5h937M511 816.5h937M511 832.5h937M511 848.5h937M511 864.5h937M511 880.5h937M511 896.5h937M511 912.5h937M511 928.5h937M511 944.5h937M511 960.5h937M511 976.5h937M511 992.5h937M511 1008.5h937M511 1024.5h937" stroke="#d9d9d9" stroke-width="1" fill="none"/><path d="M589 736.5h307M589 752.5h307M589 768.5h307M589 784.5h307M589 800.5h307" stroke="#a9cfe6" stroke-width="1" fill="none"/><path d="M665.5 721v96M742.5 721v96M819.5 721v96" stroke="#86b4d2" stroke-width="1" fill="none"/><path d="M511.5 674v14M588.5 674v14M665.5 674v14M742.5 674v14M819.5 674v14M896.5 674v14M973.5 674v14M1050.5 674v14M1127.5 674v14M1203.5 674v14M1280.5 674v14M1357.5 674v14M1434.5 674v14" stroke="#4a4a4a" stroke-width="1.200" fill="none"/><path d="M481 688.500h937" stroke="#8a8a8a" stroke-width="1.300"/><path d="M511.500 689v349" stroke="#8a8a8a" stroke-width="1.300"/><path d="M481 704.5h30M481 720.5h30M481 736.5h30M481 752.5h30M481 768.5h30M481 784.5h30M481 800.5h30M481 816.5h30M481 832.5h30M481 848.5h30M481 864.5h30M481 880.5h30M481 896.5h30M481 912.5h30M481 928.5h30M481 944.5h30M481 960.5h30M481 976.5h30M481 992.5h30M481 1008.5h30M481 1024.5h30" stroke="#555" stroke-width="1.300" fill="none"/><path d="M665.5 675v13M742.5 675v13M819.5 675v13" stroke="#4fb0e2" stroke-width="1"/><path d="M481 736.5h30M481 752.5h30M481 768.5h30M481 784.5h30M481 800.5h30" stroke="#4fb0e2" stroke-width="1"/><rect x="588.500" y="720.500" width="307.700" height="96" fill="none" stroke="#2a8fce" stroke-width="1.300"/><rect x="589" y="721" width="76" height="15" fill="#c9e4f4" stroke="#1f7fc0" stroke-width="2"/><rect x="893.700" y="814" width="5" height="5" fill="#2a8fce"/></svg>
<div class="t" style="left:30.6px;top:1.7px;width:77px;text-align:center;font-size:12px;color:#333">A</div>
<div class="t b" style="left:107.5px;top:1.7px;width:77px;text-align:center;font-size:12px;color:#fff">B</div>
<div class="t b" style="left:184.4px;top:1.7px;width:77px;text-align:center;font-size:12px;color:#fff">C</div>
<div class="t b" style="left:261.4px;top:1.7px;width:77px;text-align:center;font-size:12px;color:#fff">D</div>
<div class="t b" style="left:338.3px;top:1.7px;width:77px;text-align:center;font-size:12px;color:#fff">E</div>
<div class="t" style="left:415.2px;top:1.7px;width:77px;text-align:center;font-size:12px;color:#333">F</div>
<div class="t" style="left:492.2px;top:1.7px;width:77px;text-align:center;font-size:12px;color:#333">G</div>
<div class="t" style="left:569.1px;top:1.7px;width:77px;text-align:center;font-size:12px;color:#333">H</div>
<div class="t" style="left:646.0px;top:1.7px;width:77px;text-align:center;font-size:12px;color:#333">I</div>
<div class="t" style="left:722.9px;top:1.7px;width:77px;text-align:center;font-size:12px;color:#333">J</div>
<div class="t" style="left:799.9px;top:1.7px;width:77px;text-align:center;font-size:12px;color:#333">K</div>
<div class="t" style="left:876.8px;top:1.7px;width:77px;text-align:center;font-size:12px;color:#333">L</div>
<div class="t" style="left:0;top:17.8px;width:31px;text-align:center;font-size:12px;color:#333">1</div>
<div class="t" style="left:0;top:33.8px;width:31px;text-align:center;font-size:12px;color:#333">2</div>
<div class="t b" style="left:0;top:49.8px;width:31px;text-align:center;font-size:12px;color:#fff">3</div>
<div class="t b" style="left:0;top:65.8px;width:31px;text-align:center;font-size:12px;color:#fff">4</div>
<div class="t b" style="left:0;top:81.8px;width:31px;text-align:center;font-size:12px;color:#fff">5</div>
<div class="t b" style="left:0;top:97.8px;width:31px;text-align:center;font-size:12px;color:#fff">6</div>
<div class="t b" style="left:0;top:113.8px;width:31px;text-align:center;font-size:12px;color:#fff">7</div>
<div class="t b" style="left:0;top:129.8px;width:31px;text-align:center;font-size:12px;color:#fff">8</div>
<div class="t" style="left:0;top:145.8px;width:31px;text-align:center;font-size:12px;color:#333">9</div>
<div class="t" style="left:0;top:161.8px;width:31px;text-align:center;font-size:12px;color:#333">10</div>
<div class="t" style="left:0;top:177.8px;width:31px;text-align:center;font-size:12px;color:#333">11</div>
<div class="t" style="left:0;top:193.8px;width:31px;text-align:center;font-size:12px;color:#333">12</div>
<div class="t" style="left:0;top:209.8px;width:31px;text-align:center;font-size:12px;color:#333">13</div>
<div class="t" style="left:0;top:225.8px;width:31px;text-align:center;font-size:12px;color:#333">14</div>
<div class="t" style="left:0;top:241.8px;width:31px;text-align:center;font-size:12px;color:#333">15</div>
<div class="t" style="left:0;top:257.8px;width:31px;text-align:center;font-size:12px;color:#333">16</div>
<div class="t" style="left:0;top:273.8px;width:31px;text-align:center;font-size:12px;color:#333">17</div>
<div class="t" style="left:0;top:289.8px;width:31px;text-align:center;font-size:12px;color:#333">18</div>
<div class="t" style="left:0;top:305.8px;width:31px;text-align:center;font-size:12px;color:#333">19</div>
<div class="t" style="left:0;top:321.8px;width:31px;text-align:center;font-size:12px;color:#333">20</div>
<div class="t" style="left:0;top:337.8px;width:31px;text-align:center;font-size:12px;color:#333">21</div>
</div>
<div class="abs" style="left:937.0px;top:170.0px;width:12.0px;height:351.0px;background:#f6f6f6"></div>
<div class="abs" style="left:937.0px;top:172.0px;width:10.0px;height:4.0px;background:#c9c9c9;border-radius:1px"></div>
<div class="abs" style="left:940.0px;top:178.0px;width:5.5px;height:156.0px;background:#a6a6a6;border-radius:3px"></div>
<div class="abs" style="left:0.0px;top:519.0px;width:949.0px;height:32.0px;background:#f9f9f9"></div>
<div class="abs" style="left:3.0px;top:520.5px;width:421.0px;height:5.0px;background:#a6a6a6;border-radius:3px"></div>
<div class="abs" style="left:932.5px;top:518.0px;width:3.0px;height:11.0px;background:#8a8a8a;border-radius:1px"></div>
<svg style="left:9px;top:530px" width="80" height="16" viewBox="0 0 80 16" fill="none" stroke="#c6c6c6" stroke-width="1.300"><path d="M2 2v12M10 2l-6 6l6 6M14 2l-6 6l6 6"/><path d="M24 5v6M30 5l-4 3l4 3zM36 5l-4 3l4 3z" stroke-width="1"/><path d="M58 5v6M46 5l4 3l-4 3zM52 5l4 3l-4 3z" stroke-width="1"/><path d="M78 2v12M66 2l6 6l-6 6M70 2l6 6l-6 6"/></svg>
<svg style="left:102px;top:530px" width="16" height="16" viewBox="0 0 16 16"><path d="M1.500 1.500h8l3 3v10h-11z" fill="#fff" stroke="#9a9a9a"/><circle cx="9" cy="9.500" r="3" fill="#fff" stroke="#2a78b5" stroke-width="1.300"/><path d="M9 8v3M7.500 9.500h3" stroke="#2a78b5" stroke-width="1"/></svg>
<div class="t b" style="left:136.8px;top:532.6px;font-size:11.4px;color:#222;">Tabelle1</div>
<div class="abs" style="left:126.0px;top:547.5px;width:69.0px;height:2.0px;background:#333"></div>
<div class="abs" style="left:0.0px;top:551.0px;width:1005.0px;height:22.0px;background:#f6f6f6;border-top:1px solid #dadada"></div>
<svg class="ic" style="left:6px;top:552px;width:20px;height:20px" viewBox="0 0 20 20"><path d="M2.500 2.500h13l2 2v13h-15z" stroke="#c0604a" fill="#fff" stroke-width="1.2" /><rect x="5.5" y="2.5" width="8" height="5" stroke="#c0604a" fill="#fff" stroke-width="1.2" /><rect x="5.5" y="11.5" width="9" height="6" stroke="#c0604a" fill="#fff" stroke-width="1.2" /></svg>
<div class="t " style="left:37.0px;top:557.5px;font-size:11.5px;color:#444;">Tabelle 1 von 1</div>
<div class="t " style="left:129.0px;top:557.5px;font-size:11.5px;color:#444;">Ausgewählt: 6 Zeilen, 4 Spalten</div>
<div class="t " style="left:304.0px;top:557.5px;font-size:11.5px;color:#444;">Standard</div>
<div class="t " style="left:364.0px;top:557.5px;font-size:11.5px;color:#444;">Deutsch (Deutschland)</div>
<div class="t " style="left:665.0px;top:557.5px;font-size:11.5px;color:#444;">Mittelwert: ; Summe: 0</div>
<div class="t " style="left:966.0px;top:557.5px;font-size:11.5px;color:#444;">100%</div>
<div class="abs" style="left:30.0px;top:554.0px;width:1.0px;height:17.0px;background:#e2e2e2"></div>
<div class="abs" style="left:121.0px;top:554.0px;width:1.0px;height:17.0px;background:#e2e2e2"></div>
<div class="abs" style="left:296.0px;top:554.0px;width:1.0px;height:17.0px;background:#e2e2e2"></div>
<div class="abs" style="left:356.0px;top:554.0px;width:1.0px;height:17.0px;background:#e2e2e2"></div>
<div class="abs" style="left:487.0px;top:554.0px;width:1.0px;height:17.0px;background:#e2e2e2"></div>
<div class="abs" style="left:550.0px;top:554.0px;width:1.0px;height:17.0px;background:#e2e2e2"></div>
<div class="abs" style="left:589.0px;top:554.0px;width:1.0px;height:17.0px;background:#e2e2e2"></div>
<div class="abs" style="left:619.0px;top:554.0px;width:1.0px;height:17.0px;background:#e2e2e2"></div>
<div class="abs" style="left:824.0px;top:554.0px;width:1.0px;height:17.0px;background:#e2e2e2"></div>
<div class="abs" style="left:958.0px;top:554.0px;width:1.0px;height:17.0px;background:#e2e2e2"></div>
<svg style="left:558px;top:555px" width="30" height="16" viewBox="0 0 30 16"><rect x="1.500" y="4.500" width="15" height="8" fill="#fff" stroke="#4a90b8"/><path d="M20 2h5M20 14h5M22.500 2v12" stroke="#555" stroke-width="1" fill="none"/></svg>
<svg style="left:832px;top:555px" width="125" height="16" viewBox="0 0 125 16"><path d="M1 8h9" stroke="#333" stroke-width="1.500"/><path d="M15 8h90" stroke="#8a8a8a" stroke-width="1"/><rect x="58.500" y="3.500" width="3" height="9" fill="#fff" stroke="#444"/><path d="M109 8h10M114 3v10" stroke="#333" stroke-width="1.500"/></svg>
<div class="abs" style="left:949.0px;top:130.0px;width:1.0px;height:421.0px;background:#d4d4d4"></div>
<div class="abs" style="left:949.0px;top:306.0px;width:6.0px;height:68.0px;background:#1a1a1a"></div>
<svg style="left:949px;top:335px" width="6" height="10" viewBox="0 0 6 10"><path d="M1 1v8l4.500-4z" fill="#fff"/></svg>
<svg style="left:970px;top:144px" width="14" height="12" viewBox="0 0 14 12"><path d="M0 1.500h14M0 6h14M0 10.500h14" stroke="#222" stroke-width="1.900"/></svg>
<svg class="ic" style="left:965.5px;top:180.0px" viewBox="0 0 24 24"><rect x="3.5" y="3.5" width="17" height="17" stroke="#3a3a38" fill="#fff" stroke-width="1.2" /><rect x="3.5" y="3.5" width="17" height="1.5" stroke="#3a3a38" fill="#3a3a38" stroke-width="1" /><path d="M6.500 11.500h11M6.500 15.500h11" stroke="#1e6fa8" fill="none" stroke-width="1.1" /><rect x="13" y="10" width="2" height="3" stroke="#1e6fa8" fill="#1e6fa8" stroke-width="0.5" /><rect x="9" y="14" width="2" height="3" stroke="#1e6fa8" fill="#1e6fa8" stroke-width="0.5" /></svg>
<svg class="ic" style="left:965.5px;top:221.5px" viewBox="0 0 24 24"><text x="2" y="17" font-size="19" fill="#3a3a38" font-family="Liberation Sans,sans-serif">A</text><path d="M12.500 17l7.500-9c1-1 2.500 0 1.800 1.300l-6.800 9.200z" stroke="#3a3a38" fill="#fff" stroke-width="1" /><path d="M9.500 21.500c0-3 1.500-4.500 3.500-4l1.500 1.500c.5 2-2 3.500-5 2.500z" stroke="#1e6fa8" fill="#83beec" stroke-width="1" /></svg>
<svg class="ic" style="left:965.5px;top:263.5px" viewBox="0 0 24 24"><path d="M2.500 18.500v-14h6l2 2.500h9v3" stroke="#e8a93a" fill="#fbe6b0" stroke-width="1" /><path d="M2.500 18.500v-8h7v8z" stroke="#e8a93a" fill="#f8d683" stroke-width="1" /><rect x="9.5" y="11.5" width="12" height="10" stroke="#1e5f90" fill="#fff" stroke-width="1.2" /><path d="M10 21l3.500-4l2 2l2.500-3l3 3v2z" stroke="#1e8bcd" fill="#83beec" stroke-width="1" /><circle cx="13" cy="14.5" r="1" stroke="#e8a93a" fill="#f8db8f" stroke-width="0.6"/></svg>
<svg class="ic" style="left:965.5px;top:306.0px" viewBox="0 0 24 24"><circle cx="12" cy="12" r="9" stroke="#3a6f90" fill="#fff" stroke-width="1.2"/><path d="M16.500 7.500l-2.500 6.500l-6.500 2.500l2.500-6.500z" stroke="#1e6fa8" fill="#1e6fa8" stroke-width="1" /><circle cx="12" cy="12" r="1.2" stroke="#fff" fill="#fff" stroke-width="0"/></svg>
<svg class="ic" style="left:965.5px;top:348.0px" viewBox="0 0 24 24"><text x="2" y="18" font-size="19" font-style="italic" fill="#1e6fa8" font-family="Liberation Serif,serif">fx</text></svg>
</div>
<div class="abs" style="left:0;top:1086px;width:1500px;height:39px;background:#2d2d2d">
<svg style="left:3px;top:3px" width="33" height="33" viewBox="0 0 33 33"><circle cx="16.500" cy="16.500" r="14.200" fill="#2d2d2d" stroke="#fff" stroke-width="2.300"/><path d="M9.500 10v8.500a3.500 3.500 0 0 0 3.500 3.500h7a3.500 3.500 0 0 0 3.500-3.500v-5a2.300 2.300 0 0 0-4.600 0v4.500M18.900 13.500a2.300 2.300 0 0 0-4.600 0v4.500" fill="none" stroke="#fff" stroke-width="2.300" stroke-linecap="round"/></svg>
<div class="abs" style="left:46px;top:0;width:1px;height:39px;background:#1c1c1c"></div>
<svg style="left:59px;top:5px" width="28" height="26" viewBox="0 0 28 26"><path d="M0 3a2 2 0 0 1 2-2h8l3 3h13a2 2 0 0 1 2 2v17a2 2 0 0 1-2 2h-24a2 2 0 0 1-2-2z" fill="#e3a95e"/><rect x="0" y="6" width="28" height="19" rx="2" fill="#f8c878"/></svg>
<svg style="left:96.500px;top:5px" width="28" height="28" viewBox="0 0 28 28"><rect width="28" height="28" rx="6" fill="#f07a42"/><circle cx="14" cy="15" r="8.500" fill="#fff"/><path d="M14 10.500a4.500 4.500 0 1 0 4.500 4.500c0-1-1-1.500-2-1.200c1-2-.5-3.300-2.500-3.300z" fill="#f07a42"/><path d="M16 4.500c2 1.500 3 3.500 2.500 6l-3-1.500z" fill="#fff"/></svg>
<svg style="left:133.500px;top:5px" width="28" height="28" viewBox="0 0 28 28"><rect width="28" height="28" rx="6" fill="#1e1e1e"/><rect x=".5" y=".5" width="27" height="27" rx="5.500" fill="none" stroke="#3a3a3a"/><text x="3.500" y="11" font-size="8" font-weight="bold" fill="#fff" font-family="Liberation Mono,monospace">$_</text></svg>
<svg style="left:171.500px;top:5px" width="28" height="28" viewBox="0 0 28 28"><defs><linearGradient id="ig" x1="0" y1="0" x2="0" y2="1"><stop offset="0" stop-color="#d4682a"/><stop offset="1" stop-color="#b84a12"/></linearGradient></defs><rect width="28" height="28" rx="6" fill="url(#ig)"/><rect x="9.500" y="11.500" width="13" height="10" fill="none" stroke="#f4d2b8" stroke-width="1.300"/><rect x="5.500" y="7.500" width="13" height="10" fill="#c8561a" stroke="#f4d2b8" stroke-width="1.300"/></svg>
<div class="abs" style="left:167px;top:36px;width:35.500px;height:3px;background:#2f9fdc"></div>
<div class="abs" style="left:205px;top:0;width:35.500px;height:39px;background:#4b4b4b"></div>
<svg style="left:208px;top:5px" width="28" height="28" viewBox="0 0 28 28"><defs><linearGradient id="cg2" x1="0" y1="0" x2="0" y2="1"><stop offset="0" stop-color="#45c445"/><stop offset="1" stop-color="#2a9a2a"/></linearGradient></defs><rect width="28" height="28" rx="6" fill="url(#cg2)"/><rect x="6" y="7.500" width="16" height="12" fill="none" stroke="#e4f8e0" stroke-width="1.500"/><path d="M6 11.500h16M6 15.500h16M11.300 7.500v12M16.700 7.500v12" stroke="#e4f8e0" stroke-width="1.500"/></svg>
<div class="abs" style="left:205px;top:36px;width:35.500px;height:3px;background:#2f9fdc"></div>
<svg style="left:1399.500px;top:11.500px" width="16" height="16" viewBox="0 0 16 16" fill="#fff"><rect x="5" y="0" width="6" height="5"/><rect x="0" y="10" width="6.500" height="6"/><rect x="9.500" y="10" width="6.500" height="6"/><path d="M7.300 5h1.400v2.300h4.600v2.700h-1.400v-1.400h-7.800v1.400h-1.400v-2.700h4.600z"/></svg>
<svg style="left:1424px;top:11.500px" width="16" height="16" viewBox="0 0 16 16"><path d="M0 5.500h3l4.500-4.500v14l-4.500-4.500h-3z" fill="#fff"/><path d="M9.500 4.500a4.500 4.500 0 0 1 0 7" stroke="#fff" stroke-width="1.600" fill="none"/><path d="M11.500 2a8 8 0 0 1 0 12" stroke="#8a8a8a" stroke-width="1.400" fill="none"/></svg>
<div class="t b" style="left:1448.500px;top:13.500px;font-size:11.800px;color:#fff;transform:scaleX(1.04);transform-origin:0 0">14:10</div>
<div class="abs" style="left:1488.500px;top:4px;width:7px;height:31px;background:#484848;border-radius:1px"></div>
</div>
</body></html>
